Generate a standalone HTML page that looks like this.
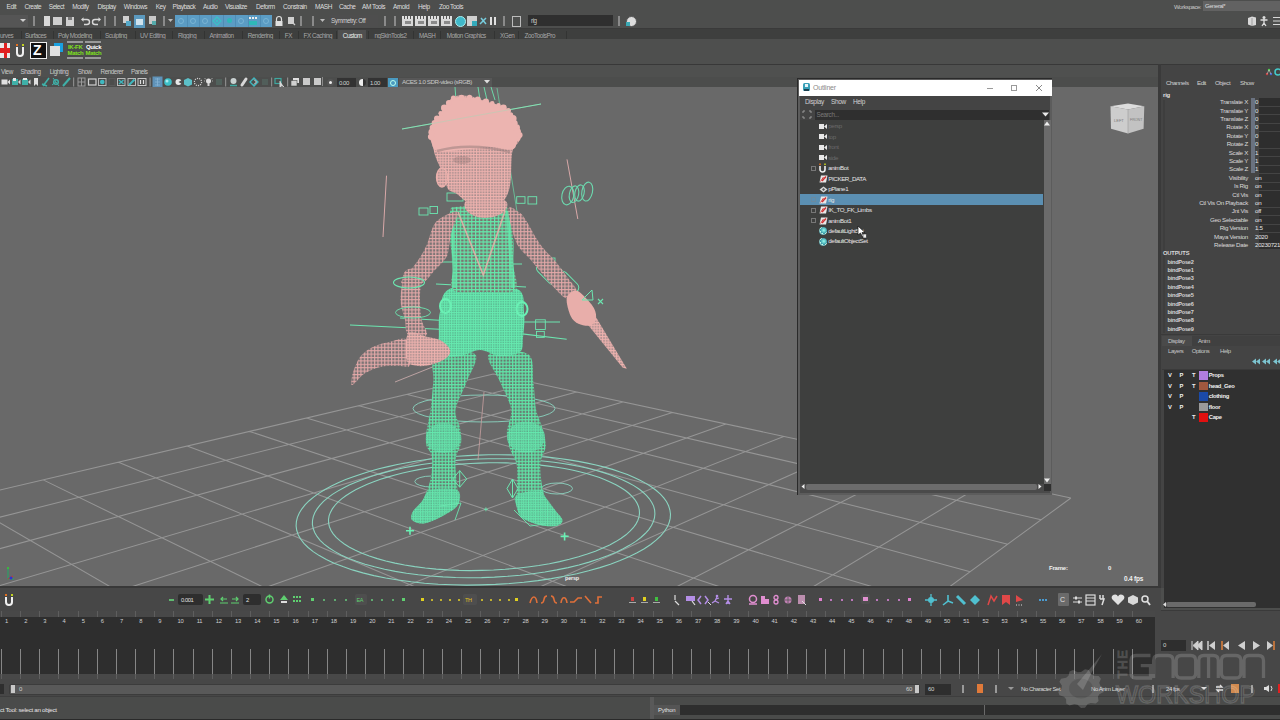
<!DOCTYPE html><html><head><meta charset="utf-8"><style>
html,body{margin:0;padding:0;}
body{width:1280px;height:720px;position:relative;overflow:hidden;background:#4d4e4d;font-family:"Liberation Sans",sans-serif;}
body>div,body>span,body>svg{position:absolute;}
.t{white-space:nowrap;-webkit-font-smoothing:antialiased;}
body{-webkit-font-smoothing:antialiased;}
</style></head><body>
<span class="t" style="left:6.6px;top:2.00px;font-size:6.5px;color:#dedede;letter-spacing:-0.45px;font-weight:400;line-height:10px;">Edit</span>
<span class="t" style="left:24.4px;top:2.00px;font-size:6.5px;color:#dedede;letter-spacing:-0.45px;font-weight:400;line-height:10px;">Create</span>
<span class="t" style="left:48.8px;top:2.00px;font-size:6.5px;color:#dedede;letter-spacing:-0.45px;font-weight:400;line-height:10px;">Select</span>
<span class="t" style="left:72.2px;top:2.00px;font-size:6.5px;color:#dedede;letter-spacing:-0.45px;font-weight:400;line-height:10px;">Modify</span>
<span class="t" style="left:97.6px;top:2.00px;font-size:6.5px;color:#dedede;letter-spacing:-0.45px;font-weight:400;line-height:10px;">Display</span>
<span class="t" style="left:123.8px;top:2.00px;font-size:6.5px;color:#dedede;letter-spacing:-0.45px;font-weight:400;line-height:10px;">Windows</span>
<span class="t" style="left:155.7px;top:2.00px;font-size:6.5px;color:#dedede;letter-spacing:-0.45px;font-weight:400;line-height:10px;">Key</span>
<span class="t" style="left:172.6px;top:2.00px;font-size:6.5px;color:#dedede;letter-spacing:-0.45px;font-weight:400;line-height:10px;">Playback</span>
<span class="t" style="left:203px;top:2.00px;font-size:6.5px;color:#dedede;letter-spacing:-0.45px;font-weight:400;line-height:10px;">Audio</span>
<span class="t" style="left:225px;top:2.00px;font-size:6.5px;color:#dedede;letter-spacing:-0.45px;font-weight:400;line-height:10px;">Visualize</span>
<span class="t" style="left:256px;top:2.00px;font-size:6.5px;color:#dedede;letter-spacing:-0.45px;font-weight:400;line-height:10px;">Deform</span>
<span class="t" style="left:283px;top:2.00px;font-size:6.5px;color:#dedede;letter-spacing:-0.45px;font-weight:400;line-height:10px;">Constrain</span>
<span class="t" style="left:315px;top:2.00px;font-size:6.5px;color:#dedede;letter-spacing:-0.45px;font-weight:400;line-height:10px;">MASH</span>
<span class="t" style="left:339px;top:2.00px;font-size:6.5px;color:#dedede;letter-spacing:-0.45px;font-weight:400;line-height:10px;">Cache</span>
<span class="t" style="left:362px;top:2.00px;font-size:6.5px;color:#dedede;letter-spacing:-0.45px;font-weight:400;line-height:10px;">AM Tools</span>
<span class="t" style="left:393px;top:2.00px;font-size:6.5px;color:#dedede;letter-spacing:-0.45px;font-weight:400;line-height:10px;">Arnold</span>
<span class="t" style="left:418px;top:2.00px;font-size:6.5px;color:#dedede;letter-spacing:-0.45px;font-weight:400;line-height:10px;">Help</span>
<span class="t" style="left:439px;top:2.00px;font-size:6.5px;color:#dedede;letter-spacing:-0.45px;font-weight:400;line-height:10px;">Zoo Tools</span>
<span class="t" style="left:1174px;top:1.50px;font-size:6px;color:#c8c8c8;letter-spacing:-0.45px;font-weight:400;line-height:10px;">Workspace:</span>
<div style="left:1203px;top:1px;width:77px;height:10px;background:#626262;"></div>
<span class="t" style="left:1205px;top:1.20px;font-size:6px;color:#dcdcdc;letter-spacing:-0.45px;font-weight:400;line-height:10px;">General*</span>
<div style="left:0px;top:15px;width:28px;height:12px;background:#555555;"></div>
<svg style="left:20px;top:18px" width="6" height="5"><path d="M0 1 L6 1 L3 4 Z" fill="#cfcfcf"/></svg>
<div style="left:33px;top:16px;width:1.5px;height:10px;background:#8a8a8a;"></div>
<div style="left:104px;top:16px;width:1.5px;height:10px;background:#8a8a8a;"></div>
<div style="left:114px;top:16px;width:1.5px;height:10px;background:#8a8a8a;"></div>
<div style="left:163px;top:16px;width:1.5px;height:10px;background:#8a8a8a;"></div>
<div style="left:300px;top:16px;width:1.5px;height:10px;background:#8a8a8a;"></div>
<div style="left:312px;top:16px;width:1.5px;height:10px;background:#8a8a8a;"></div>
<div style="left:384px;top:16px;width:1.5px;height:10px;background:#8a8a8a;"></div>
<div style="left:394px;top:16px;width:1.5px;height:10px;background:#8a8a8a;"></div>
<div style="left:503px;top:16px;width:1.5px;height:10px;background:#8a8a8a;"></div>
<div style="left:618px;top:16px;width:1.5px;height:10px;background:#8a8a8a;"></div>
<div style="left:44px;top:16px;width:6px;height:10px;background:#d8d8d8;"></div>
<div style="left:53px;top:17px;width:9px;height:8px;background:#cfcfcf;"></div>
<div style="left:66px;top:17px;width:8px;height:9px;background:#d0d0d0;"></div>
<div style="left:68px;top:17px;width:4px;height:3px;background:#7a7a7a;"></div>
<svg style="left:80px;top:16px" width="22" height="10"><path d="M3 3.5 h4 a2.5 2.5 0 0 1 0 5 h-3" stroke="#d8d8d8" stroke-width="1.4" fill="none"/><path d="M1 3.5 L3.5 1.3 L3.5 5.7Z" fill="#d8d8d8"/><path d="M19 3.5 h-4 a2.5 2.5 0 0 0 0 5 h3" stroke="#d8d8d8" stroke-width="1.4" fill="none"/><path d="M21 3.5 L18.5 1.3 L18.5 5.7Z" fill="#d8d8d8"/></svg>
<div style="left:123px;top:16px;width:6px;height:7px;background:#cfcfcf;"></div>
<div style="left:126px;top:21px;width:5px;height:5px;background:#55a8c8;"></div>
<div style="left:134px;top:14.5px;width:11px;height:13px;background:#5b99be;"></div>
<div style="left:136px;top:19px;width:7px;height:6px;background:#cfe3ee;"></div>
<div style="left:149px;top:16px;width:7px;height:8px;background:#c8c8c8;"></div>
<div style="left:152px;top:21px;width:4px;height:4px;background:#5aa;"></div>
<svg style="left:168px;top:19px" width="5" height="4"><path d="M0 0 L5 0 L2.5 3 Z" fill="#bbb"/></svg>
<div style="left:174.5px;top:14.6px;width:97.5px;height:12.4px;background:#5b9cc4;"></div>
<div style="left:186.69px;top:15px;width:0.8px;height:12px;background:#4f8db5;"></div>
<div style="left:198.88px;top:15px;width:0.8px;height:12px;background:#4f8db5;"></div>
<div style="left:211.07px;top:15px;width:0.8px;height:12px;background:#4f8db5;"></div>
<div style="left:223.26px;top:15px;width:0.8px;height:12px;background:#4f8db5;"></div>
<div style="left:235.45px;top:15px;width:0.8px;height:12px;background:#4f8db5;"></div>
<div style="left:247.64px;top:15px;width:0.8px;height:12px;background:#4f8db5;"></div>
<div style="left:259.83px;top:15px;width:0.8px;height:12px;background:#4f8db5;"></div>
<div style="left:177.5px;top:17.8px;width:6px;height:6px;border-radius:50%;border:1px solid #79b4d4;box-sizing:border-box"></div>
<div style="left:189.69px;top:17.8px;width:6px;height:6px;border-radius:50%;border:1px solid #79b4d4;box-sizing:border-box"></div>
<div style="left:201.88px;top:17.8px;width:6px;height:6px;border-radius:50%;border:1px solid #79b4d4;box-sizing:border-box"></div>
<div style="left:238.45px;top:17.8px;width:6px;height:6px;border-radius:50%;border:1px solid #79b4d4;box-sizing:border-box"></div>
<div style="left:262.83px;top:17.8px;width:6px;height:6px;border-radius:50%;border:1px solid #79b4d4;box-sizing:border-box"></div>
<svg style="left:211.5px;top:16px" width="10" height="10"><path d="M5 1 L9 5 L5 9 L1 5Z" stroke="#3ac0c8" stroke-width="1.3" fill="none"/><circle cx="5" cy="5" r="1.2" fill="#3ac0c8"/></svg>
<div style="left:226.5px;top:18px;width:5px;height:5px;border-radius:50%;background:#2fb8b8"></div>
<svg style="left:248px;top:16px" width="10" height="10"><rect x="1" y="1" width="2" height="2" fill="#eee"/><rect x="4" y="1" width="2" height="2" fill="#eee"/><rect x="7" y="1" width="2" height="2" fill="#eee"/><rect x="1" y="5" width="8" height="4" fill="#2fb8b8"/></svg>
<svg style="left:274px;top:15px" width="22" height="12"><path d="M2.5 6 V4 a2.5 2.5 0 0 1 5 0 V6" stroke="#e0e0e0" stroke-width="1.2" fill="none"/><rect x="1.5" y="6" width="7" height="5" fill="#e0e0e0"/><rect x="14" y="2" width="6" height="7" fill="#cfcfcf"/><path d="M17 6 L21 10" stroke="#cfcfcf" stroke-width="1.2"/></svg>
<svg style="left:320px;top:19px" width="5" height="4"><path d="M0 0 L5 0 L2.5 3 Z" fill="#bbb"/></svg>
<div style="left:329px;top:15px;width:49px;height:12px;background:#4e4e4e;"></div>
<span class="t" style="left:331px;top:16.00px;font-size:6.3px;color:#d0d0d0;letter-spacing:-0.45px;font-weight:400;line-height:10px;">Symmetry: Off</span>
<div style="left:402px;top:15.5px;width:11px;height:3px;background:#e0e0e0;;background:repeating-linear-gradient(90deg,#e0e0e0 0 2px,#555 2px 3px)"></div>
<div style="left:402px;top:19px;width:11px;height:7px;background:#d8d8d8;"></div>
<div style="left:404.5px;top:21px;width:6px;height:3px;background:#8a8a8a;"></div>
<div style="left:415px;top:15.5px;width:11px;height:3px;background:#e0e0e0;;background:repeating-linear-gradient(90deg,#e0e0e0 0 2px,#555 2px 3px)"></div>
<div style="left:415px;top:19px;width:11px;height:7px;background:#d8d8d8;"></div>
<div style="left:417.5px;top:21px;width:6px;height:3px;background:#8a8a8a;"></div>
<div style="left:428px;top:15.5px;width:11px;height:3px;background:#e0e0e0;;background:repeating-linear-gradient(90deg,#e0e0e0 0 2px,#555 2px 3px)"></div>
<div style="left:428px;top:19px;width:11px;height:7px;background:#d8d8d8;"></div>
<div style="left:430.5px;top:21px;width:6px;height:3px;background:#8a8a8a;"></div>
<div style="left:441px;top:15.5px;width:11px;height:3px;background:#e0e0e0;;background:repeating-linear-gradient(90deg,#e0e0e0 0 2px,#555 2px 3px)"></div>
<div style="left:441px;top:19px;width:11px;height:7px;background:#d8d8d8;"></div>
<div style="left:443.5px;top:21px;width:6px;height:3px;background:#8a8a8a;"></div>
<div style="left:455px;top:16px;width:9px;height:9px;border-radius:50%;background:#3fb8c9;border:1px solid #aee"></div>
<div style="left:467px;top:16px;width:10px;height:10px;background:#d0d0d0;"></div>
<div style="left:472px;top:21px;width:5px;height:5px;background:#3ab;"></div>
<svg style="left:478px;top:16px" width="10" height="10"><path d="M2 8 L8 2 M3 2 L8 8" stroke="#7cd" stroke-width="1.5"/></svg>
<div style="left:490px;top:17px;width:2px;height:8px;background:#e0e0e0;"></div>
<div style="left:494px;top:17px;width:2px;height:8px;background:#e0e0e0;"></div>
<div style="left:512px;top:16px;width:7px;height:9px;background:transparent;;border:1px solid #bbb"></div>
<div style="left:528px;top:15px;width:85px;height:11px;background:#2f2f2f;"></div>
<span class="t" style="left:531px;top:15.50px;font-size:6.3px;color:#c8c8c8;letter-spacing:-0.45px;font-weight:400;line-height:10px;">rig</span>
<div style="left:626px;top:16px;width:9px;height:9px;border-radius:50%;background:#ddd;border:1px solid #555"></div>
<div style="left:626px;top:22px;width:4px;height:4px;background:#3aa9b5;"></div>
<svg style="left:1246px;top:15px" width="34" height="12"><path d="M2 3 L6 1.5 L10 2.5 L10 10 L6 11 L2 9.5Z" fill="#d8d8d8"/><path d="M6 3 V11" stroke="#888" stroke-width=".7"/><circle cx="18" cy="2.5" r="1.5" fill="#ddd"/><path d="M14.5 5 H21.5 M18 4 V8 M18 8 L16 11 M18 8 L20 11" stroke="#ddd" stroke-width="1.3"/><path d="M27 2.5 H34 M27 6 H34 M27 9.5 H34" stroke="#d8d8d8" stroke-width="1.2"/></svg>
<div style="left:0px;top:28px;width:1280px;height:1px;background:#3a3a3a;"></div>
<div style="left:0px;top:29px;width:1280px;height:10px;background:#3e3f3e;"></div>
<div style="left:338px;top:30px;width:28px;height:9px;background:#4f4f4f;"></div>
<div style="left:21px;top:30.5px;width:1px;height:8px;background:#333433;"></div>
<div style="left:53px;top:30.5px;width:1px;height:8px;background:#333433;"></div>
<div style="left:100px;top:30.5px;width:1px;height:8px;background:#333433;"></div>
<div style="left:135px;top:30.5px;width:1px;height:8px;background:#333433;"></div>
<div style="left:172px;top:30.5px;width:1px;height:8px;background:#333433;"></div>
<div style="left:204px;top:30.5px;width:1px;height:8px;background:#333433;"></div>
<div style="left:242px;top:30.5px;width:1px;height:8px;background:#333433;"></div>
<div style="left:279px;top:30.5px;width:1px;height:8px;background:#333433;"></div>
<div style="left:298px;top:30.5px;width:1px;height:8px;background:#333433;"></div>
<div style="left:336px;top:30.5px;width:1px;height:8px;background:#333433;"></div>
<div style="left:368px;top:30.5px;width:1px;height:8px;background:#333433;"></div>
<div style="left:413px;top:30.5px;width:1px;height:8px;background:#333433;"></div>
<div style="left:440px;top:30.5px;width:1px;height:8px;background:#333433;"></div>
<div style="left:494px;top:30.5px;width:1px;height:8px;background:#333433;"></div>
<div style="left:518px;top:30.5px;width:1px;height:8px;background:#333433;"></div>
<div style="left:566px;top:30.5px;width:1px;height:8px;background:#333433;"></div>
<span class="t" style="left:0px;top:30.50px;font-size:6.3px;color:#a8a8a8;letter-spacing:-0.45px;font-weight:400;line-height:10px;">urves</span>
<span class="t" style="left:25px;top:30.50px;font-size:6.3px;color:#a8a8a8;letter-spacing:-0.45px;font-weight:400;line-height:10px;">Surfaces</span>
<span class="t" style="left:58px;top:30.50px;font-size:6.3px;color:#a8a8a8;letter-spacing:-0.45px;font-weight:400;line-height:10px;">Poly Modeling</span>
<span class="t" style="left:105px;top:30.50px;font-size:6.3px;color:#a8a8a8;letter-spacing:-0.45px;font-weight:400;line-height:10px;">Sculpting</span>
<span class="t" style="left:140px;top:30.50px;font-size:6.3px;color:#a8a8a8;letter-spacing:-0.45px;font-weight:400;line-height:10px;">UV Editing</span>
<span class="t" style="left:178px;top:30.50px;font-size:6.3px;color:#a8a8a8;letter-spacing:-0.45px;font-weight:400;line-height:10px;">Rigging</span>
<span class="t" style="left:209.6px;top:30.50px;font-size:6.3px;color:#a8a8a8;letter-spacing:-0.45px;font-weight:400;line-height:10px;">Animation</span>
<span class="t" style="left:247.7px;top:30.50px;font-size:6.3px;color:#a8a8a8;letter-spacing:-0.45px;font-weight:400;line-height:10px;">Rendering</span>
<span class="t" style="left:284.8px;top:30.50px;font-size:6.3px;color:#a8a8a8;letter-spacing:-0.45px;font-weight:400;line-height:10px;">FX</span>
<span class="t" style="left:303.6px;top:30.50px;font-size:6.3px;color:#a8a8a8;letter-spacing:-0.45px;font-weight:400;line-height:10px;">FX Caching</span>
<span class="t" style="left:342.8px;top:30.50px;font-size:6.3px;color:#eeeeee;letter-spacing:-0.45px;font-weight:400;line-height:10px;">Custom</span>
<span class="t" style="left:374.5px;top:30.50px;font-size:6.3px;color:#a8a8a8;letter-spacing:-0.45px;font-weight:400;line-height:10px;">ngSkinTools2</span>
<span class="t" style="left:419px;top:30.50px;font-size:6.3px;color:#a8a8a8;letter-spacing:-0.45px;font-weight:400;line-height:10px;">MASH</span>
<span class="t" style="left:446.7px;top:30.50px;font-size:6.3px;color:#a8a8a8;letter-spacing:-0.45px;font-weight:400;line-height:10px;">Motion Graphics</span>
<span class="t" style="left:500px;top:30.50px;font-size:6.3px;color:#a8a8a8;letter-spacing:-0.45px;font-weight:400;line-height:10px;">XGen</span>
<span class="t" style="left:524.6px;top:30.50px;font-size:6.3px;color:#a8a8a8;letter-spacing:-0.45px;font-weight:400;line-height:10px;">ZooToolsPro</span>
<div style="left:0px;top:39px;width:1280px;height:25px;background:#4e4f4e;"></div>
<div style="left:0px;top:43px;width:10px;height:15px;background:#e8e8e8;"></div>
<div style="left:0px;top:48px;width:10px;height:5px;background:#e02020;"></div>
<div style="left:4px;top:43px;width:3px;height:15px;background:#e02020;"></div>
<svg style="left:14px;top:42px" width="12" height="16"><path d="M3 5 v6 a3 3 0 0 0 6 0 v-6" stroke="#f0f0f0" stroke-width="2" fill="none"/><rect x="2" y="2" width="2" height="2" fill="#e07020"/><rect x="8" y="2" width="2" height="2" fill="#c0d020"/></svg>
<div style="left:29.5px;top:41.5px;width:17.5px;height:17px;background:#111;;border:1px solid #eee;box-sizing:border-box"></div>
<span class="t" style="left:33px;top:42.00px;font-size:14px;color:#fff;letter-spacing:0px;font-weight:700;line-height:16px;">Z</span>
<div style="left:54px;top:43px;width:9px;height:9px;background:#1aa0e0;"></div>
<div style="left:50px;top:46px;width:10px;height:10px;background:#e0e0e0;"></div>
<div style="left:67px;top:41px;width:16px;height:18px;background:#4a4a4a;;border-top:2px solid #999;border-bottom:2px solid #999;box-sizing:border-box"></div>
<span class="t" style="left:68px;top:43.50px;font-size:6px;color:#7fe020;letter-spacing:-0.3px;font-weight:700;line-height:7px;">IK-FK</span>
<span class="t" style="left:67.5px;top:49.50px;font-size:6px;color:#7fe020;letter-spacing:-0.3px;font-weight:700;line-height:7px;">Match</span>
<div style="left:85px;top:41px;width:16px;height:18px;background:#4a4a4a;;border-top:2px solid #999;border-bottom:2px solid #999;box-sizing:border-box"></div>
<span class="t" style="left:86px;top:43.50px;font-size:6px;color:#ffffff;letter-spacing:-0.3px;font-weight:700;line-height:7px;">Quick</span>
<span class="t" style="left:85.5px;top:49.50px;font-size:6px;color:#7fe020;letter-spacing:-0.3px;font-weight:700;line-height:7px;">Match</span>
<div style="left:0px;top:64px;width:1280px;height:1px;background:#383838;"></div>
<div style="left:0px;top:65px;width:1158px;height:12px;background:#4f504f;"></div>
<div style="left:0px;top:77px;width:1158px;height:10px;background:#4c4d4c;"></div>
<span class="t" style="left:1px;top:67.20px;font-size:6.3px;color:#c8c8c8;letter-spacing:-0.45px;font-weight:400;line-height:10px;">View</span>
<span class="t" style="left:20.5px;top:67.20px;font-size:6.3px;color:#c8c8c8;letter-spacing:-0.45px;font-weight:400;line-height:10px;">Shading</span>
<span class="t" style="left:49.8px;top:67.20px;font-size:6.3px;color:#c8c8c8;letter-spacing:-0.45px;font-weight:400;line-height:10px;">Lighting</span>
<span class="t" style="left:77.7px;top:67.20px;font-size:6.3px;color:#c8c8c8;letter-spacing:-0.45px;font-weight:400;line-height:10px;">Show</span>
<span class="t" style="left:100.6px;top:67.20px;font-size:6.3px;color:#c8c8c8;letter-spacing:-0.45px;font-weight:400;line-height:10px;">Renderer</span>
<span class="t" style="left:131px;top:67.20px;font-size:6.3px;color:#c8c8c8;letter-spacing:-0.45px;font-weight:400;line-height:10px;">Panels</span>
<svg style="left:0px;top:76px" width="300" height="12">
<rect x="1.5" y="3.5" width="6" height="5" fill="#e0e0e0"/><path d="M7.5 6 L10 3.5 V8.5Z" fill="#e0e0e0"/>
<rect x="12" y="3" width="6" height="6" fill="#3fb0a8"/><rect x="13" y="2" width="3" height="3" fill="#e8e8e8"/><path d="M18 6 L20.5 3.5 V8.5Z" fill="#d8d8d8"/>
<rect x="22" y="3" width="6" height="6" fill="#3fb0a8"/><rect x="23" y="2" width="4" height="2" fill="#e8e8e8"/><path d="M28 6 L30.5 3.5 V8.5Z" fill="#d8d8d8"/>
<path d="M34 2 H38 V10 L36 8 L34 10Z" fill="#e0e0e0"/>
<path d="M43 10 L49 2 M42 8 L47 10" stroke="#3fb0a8" stroke-width="1.6"/>
<circle cx="56" cy="6" r="2.3" fill="none" stroke="#3fb0a8" stroke-width="1.5"/><path d="M53 2 L59 10 M52 9 L56 6" stroke="#3fb0a8" stroke-width="1"/>
<path d="M63 10 L70 2" stroke="#3fb0a8" stroke-width="2"/>
<rect x="73" y="1.5" width="1.2" height="9" fill="#8a8a8a"/>
<rect x="78" y="2" width="7" height="8" fill="none" stroke="#9a9a9a" stroke-width="1"/><path d="M81.5 2 V10 M78 6 H85" stroke="#9a9a9a"/>
<rect x="88.5" y="3" width="7.5" height="6" fill="none" stroke="#d0d0d0" stroke-width="1.2"/>
<rect x="98.5" y="2.5" width="7.5" height="7" fill="none" stroke="#b8b8b8" stroke-width="1"/><circle cx="102.25" cy="6" r="2.3" fill="#3fb8c0"/>
<rect x="109" y="2.5" width="6" height="7" fill="none" stroke="#5a5a5a" stroke-width="1"/>
<rect x="117.5" y="2.5" width="7.5" height="7" fill="none" stroke="#b8b8b8" stroke-width="1"/><path d="M119 4 L123.5 8 M123.5 4 L119 8" stroke="#3fb8c0" stroke-width="1.3"/>
<rect x="128" y="2.5" width="7.5" height="7" fill="none" stroke="#b8b8b8" stroke-width="1"/><path d="M129 9 L134.5 3.5" stroke="#3fb8c0" stroke-width="2"/>
<rect x="138" y="2.5" width="8" height="7" fill="none" stroke="#c8c8c8" stroke-width="1"/><path d="M140.5 4 V8 M143.5 4 V8" stroke="#e0e0e0" stroke-width="1.2"/>
<rect x="149.5" y="1.5" width="1.2" height="9" fill="#8a8a8a"/>
<rect x="152.5" y="0.5" width="10" height="11" fill="#5f92b8"/><path d="M155 3 H160 M155 6 H160 M155 9 H160 M157.5 2 V10" stroke="#86b4d4" stroke-width=".8"/>
<circle cx="168" cy="6" r="3.8" fill="#3cc0c8"/><circle cx="167" cy="5" r="1.5" fill="#a8ecf0"/>
<circle cx="178.5" cy="6" r="3" fill="#e8e8e8"/><path d="M178.5 6 L182 4 V8Z" fill="#4c4d4c"/>
<path d="M188 2 L192 4 V8.5 L188 10.5 L184 8.5 V4Z" fill="#5cc0c8"/>
<circle cx="198" cy="6" r="3.6" fill="none" stroke="#d0d0d0" stroke-width="1.2" stroke-dasharray="1.2 1"/>
<circle cx="208.5" cy="5" r="2.5" fill="#e0e0e0"/><rect x="207.5" y="7" width="2" height="3" fill="#d0d0d0"/><path d="M204.5 2 L206 3.5 M212.5 2 L211 3.5 M204 5 H205 M212 5 H213" stroke="#ccc" stroke-width=".7"/>
<rect x="216" y="3" width="6" height="6" fill="#557068" opacity=".6"/>
<rect x="225" y="1.5" width="1.2" height="9" fill="#8a8a8a"/>
<circle cx="233.5" cy="5" r="3" fill="#c8d0d0"/><path d="M230 9.5 H237" stroke="#3fa8a0" stroke-width="1.5"/>
<path d="M242 9 L246 3" stroke="#d8d8d8" stroke-width="3" stroke-linecap="round"/>
<path d="M254 2 L258 6 L254 10 L250 6Z" fill="none" stroke="#3fb8c0" stroke-width="1.3"/><path d="M254 3.5 L256.5 6 L254 8.5" stroke="#e0e0e0" fill="none"/>
<rect x="262" y="3" width="6" height="6" fill="#557068" opacity=".5"/>
<rect x="271" y="1.5" width="1.2" height="9" fill="#8a8a8a"/>
<rect x="275" y="2.5" width="6" height="5" fill="none" stroke="#3fa8a0" stroke-width="1.2"/><path d="M280 5 L280 11 L282 9.5 L284 11" stroke="#d8d8d8" stroke-width="1" fill="#d8d8d8"/>
<rect x="287" y="1.5" width="1.2" height="9" fill="#8a8a8a"/>
<rect x="293" y="2" width="6" height="5" fill="#e0e0e0"/><rect x="291" y="4.5" width="6" height="5.5" fill="#d0d0d0" stroke="#4c4d4c" stroke-width=".6"/>
</svg>
<div style="left:303px;top:78px;width:7px;height:7px;background:#d8d8d8;;opacity:.9"></div>
<div style="left:314px;top:78px;width:7px;height:7px;background:#d8d8d8;;opacity:.9"></div>
<div style="left:322px;top:77px;width:1px;height:9px;background:#8a8a8a;"></div>
<div style="left:327px;top:78.5px;width:7px;height:7px;border-radius:50%;background:#eee;border:2px solid #555;box-sizing:border-box"></div>
<div style="left:337px;top:78px;width:18.5px;height:9px;background:#333333;"></div>
<span class="t" style="left:339px;top:77.50px;font-size:6px;color:#d0d0d0;letter-spacing:-0.45px;font-weight:400;line-height:10px;">0.00</span>
<div style="left:359px;top:78.5px;width:7px;height:7px;border-radius:50%;background:linear-gradient(90deg,#eee 50%,#333 50%)"></div>
<div style="left:368px;top:78px;width:19px;height:9px;background:#333333;"></div>
<span class="t" style="left:370px;top:77.50px;font-size:6px;color:#d0d0d0;letter-spacing:-0.45px;font-weight:400;line-height:10px;">1.00</span>
<div style="left:388px;top:78px;width:10px;height:9px;background:#4a9ac0;"></div>
<div style="left:390px;top:79.5px;width:6px;height:6px;border-radius:50%;border:1px solid #bfe;box-sizing:border-box"></div>
<div style="left:399px;top:77.6px;width:93px;height:9.4px;background:#575757;"></div>
<span class="t" style="left:402px;top:77.30px;font-size:6.2px;color:#c8c8c8;letter-spacing:-0.45px;font-weight:400;line-height:10px;">ACES 1.0 SDR-video (sRGB)</span>
<svg style="left:484px;top:80px" width="6" height="4"><path d="M0 0 L6 0 L3 3.5 Z" fill="#ddd"/></svg>
<svg style="left:0;top:87px" width="1158" height="499" viewBox="0 87 1158 499">
<rect x="0" y="87" width="1158" height="499" fill="#696969"/>
<path d="M-133.5 521.4L460.1 944.9M-40.4 499.5L578.7 858.1M43.2 479.9L674.9 787.8M118.6 462.2L754.4 729.6M187.1 446.1L821.2 680.7M249.5 431.4L878.2 639.1M306.5 418.0L927.3 603.1M359.0 405.7L970.2 571.8M407.3 394.4L1007.8 544.2M452.0 383.9L1041.2 519.8M493.4 374.1L1070.9 498.0M-133.5 521.4L493.4 374.1M-103.0 543.1L533.6 382.8M-69.0 567.4L576.6 392.0M-30.9 594.6L622.8 401.9M12.1 625.3L672.4 412.5M61.0 660.2L725.9 424.0M117.2 700.3L783.7 436.4M182.4 746.8L846.4 449.9M258.9 801.4L914.6 464.5M349.9 866.3L989.2 480.5M460.1 944.9L1070.9 498.0" stroke="#959595" stroke-width="1.05" fill="none"/>
<defs>
<pattern id="pm" width="3.4" height="3.4" patternUnits="userSpaceOnUse"><rect width="3.4" height="3.4" fill="#7a7474"/><path d="M0 0.6H3.4M0.6 0V3.4" stroke="#e4a8a8" stroke-width="1.1"/></pattern>
<pattern id="pf" width="2.8" height="2.8" patternUnits="userSpaceOnUse"><rect width="2.8" height="2.8" fill="#a88e8e"/><path d="M0 0.6H2.8M0.6 0V2.8" stroke="#eeb2ae" stroke-width="1.1"/></pattern>
<pattern id="gm" width="3.2" height="3.2" patternUnits="userSpaceOnUse"><rect width="3.2" height="3.2" fill="#687870"/><path d="M0 0.6H3.2M0.6 0V3.2" stroke="#60e6a8" stroke-width="1.15"/></pattern>
<pattern id="gd" width="2.4" height="2.4" patternUnits="userSpaceOnUse"><rect width="2.4" height="2.4" fill="#5ab890"/><path d="M0 0.5H2.4M0.5 0V2.4" stroke="#66eab0" stroke-width="1"/></pattern>
<pattern id="gt" width="3.8" height="3.4" patternUnits="userSpaceOnUse"><rect width="3.8" height="3.4" fill="#7a7470"/><path d="M0 0.6H3.8M0.6 0V3.4" stroke="#64e8aa" stroke-width="1.2"/></pattern>
</defs>
<path d="M586.5 473.5 L593.2 475.5 L599.6 477.6 L605.6 479.9 L611.2 482.4 L616.4 485.0 L621.1 487.7 L625.4 490.5 L629.1 493.5 L632.3 496.6 L635.0 499.8 L637.0 503.1 L638.5 506.4 L639.3 509.9 L639.5 513.4 L639.0 516.9 L637.8 520.5 L635.9 524.1 L633.3 527.7 L630.0 531.2 L626.0 534.8 L621.2 538.2 L615.8 541.6 L609.7 544.9 L602.8 548.1 L595.4 551.2 L587.3 554.1 L578.6 556.8 L569.3 559.3 L559.6 561.6 L549.4 563.7 L538.8 565.5 L527.8 567.0 L516.6 568.3 L505.2 569.3 L493.6 570.0 L482.0 570.4 L470.3 570.6 L458.8 570.4 L447.4 569.9 L436.2 569.1 L425.3 568.0 L414.7 566.6 L404.6 565.0 L395.0 563.1 L385.8 561.0 L377.3 558.6 L369.3 556.0 L362.0 553.3 L355.4 550.3 L349.5 547.2 L344.3 544.0 L339.9 540.7 L336.2 537.3 L333.2 533.8 L330.9 530.2 L329.4 526.7 L328.6 523.1 L328.5 519.5 L329.1 515.9 L330.4 512.4 L332.3 508.9 L334.8 505.5 L337.9 502.1 L341.6 498.9 L345.8 495.7 L350.5 492.7 L355.6 489.7 L361.3 486.9 L367.3 484.2 L373.7 481.7 L380.5 479.3 L387.6 477.1 L395.0 475.0 L402.7 473.0 L410.6 471.2 L418.7 469.6 L427.0 468.2 L435.5 466.9 L444.1 465.8 L452.8 464.8 L461.6 464.1 L470.5 463.5 L479.4 463.1 L488.2 462.8 L497.1 462.8 L505.9 462.9 L514.7 463.2 L523.4 463.6 L531.9 464.3 L540.3 465.1 L548.6 466.1 L556.7 467.2 L564.5 468.5 L572.1 470.0 L579.5 471.7Z" stroke="#8ad4c0" stroke-width="1.1" fill="none"/>
<path d="M595.5 470.3 L602.9 472.4 L610.0 474.8 L616.6 477.2 L622.8 479.9 L628.5 482.7 L633.8 485.6 L638.6 488.7 L642.8 492.0 L646.4 495.4 L649.4 498.8 L651.8 502.4 L653.6 506.1 L654.6 509.9 L654.9 513.8 L654.5 517.7 L653.4 521.6 L651.5 525.6 L648.8 529.6 L645.2 533.5 L640.9 537.5 L635.8 541.4 L629.9 545.1 L623.2 548.8 L615.8 552.4 L607.6 555.8 L598.7 559.1 L589.1 562.1 L578.9 565.0 L568.1 567.6 L556.7 569.9 L544.9 572.0 L532.7 573.7 L520.2 575.2 L507.5 576.3 L494.5 577.1 L481.5 577.6 L468.6 577.7 L455.6 577.5 L442.9 576.9 L430.4 576.0 L418.3 574.8 L406.5 573.2 L395.3 571.4 L384.6 569.2 L374.5 566.8 L365.0 564.2 L356.3 561.3 L348.2 558.2 L341.0 554.9 L334.6 551.4 L328.9 547.8 L324.1 544.1 L320.1 540.3 L317.0 536.4 L314.7 532.4 L313.2 528.5 L312.4 524.5 L312.5 520.5 L313.3 516.6 L314.8 512.7 L317.1 508.9 L320.0 505.1 L323.5 501.4 L327.7 497.9 L332.4 494.4 L337.7 491.1 L343.4 487.9 L349.7 484.8 L356.4 481.9 L363.5 479.2 L370.9 476.6 L378.8 474.1 L386.9 471.9 L395.3 469.8 L403.9 467.8 L412.8 466.1 L421.9 464.5 L431.1 463.2 L440.5 462.0 L450.0 461.0 L459.5 460.1 L469.2 459.5 L478.8 459.0 L488.5 458.8 L498.1 458.7 L507.7 458.8 L517.2 459.1 L526.7 459.6 L536.0 460.3 L545.1 461.2 L554.1 462.3 L562.9 463.5 L571.5 464.9 L579.8 466.5 L587.8 468.3Z" stroke="#8ad4c0" stroke-width="1.1" fill="none"/>
<path d="M604.4 467.1 L612.5 469.4 L620.1 471.9 L627.4 474.6 L634.2 477.4 L640.5 480.5 L646.3 483.6 L651.6 487.0 L656.3 490.5 L660.4 494.1 L663.8 497.9 L666.6 501.8 L668.6 505.8 L669.9 510.0 L670.5 514.2 L670.2 518.4 L669.1 522.8 L667.2 527.1 L664.4 531.5 L660.7 535.9 L656.1 540.2 L650.7 544.5 L644.3 548.7 L637.1 552.8 L629.0 556.8 L620.1 560.6 L610.4 564.2 L599.9 567.6 L588.6 570.8 L576.8 573.7 L564.3 576.3 L551.3 578.6 L537.8 580.6 L523.9 582.2 L509.8 583.5 L495.5 584.4 L481.1 584.9 L466.7 585.1 L452.4 584.8 L438.3 584.2 L424.5 583.2 L411.1 581.8 L398.1 580.0 L385.7 578.0 L373.9 575.6 L362.8 572.9 L352.4 569.9 L342.9 566.6 L334.1 563.2 L326.3 559.5 L319.3 555.6 L313.2 551.6 L308.1 547.5 L303.9 543.3 L300.6 539.0 L298.2 534.7 L296.7 530.3 L296.1 525.9 L296.4 521.6 L297.4 517.3 L299.3 513.0 L301.9 508.8 L305.2 504.7 L309.2 500.7 L313.9 496.9 L319.1 493.1 L325.0 489.5 L331.4 486.1 L338.2 482.8 L345.6 479.6 L353.4 476.7 L361.5 473.9 L370.0 471.2 L378.9 468.8 L388.0 466.6 L397.4 464.5 L407.0 462.7 L416.8 461.0 L426.8 459.5 L437.0 458.2 L447.2 457.2 L457.5 456.3 L467.9 455.6 L478.3 455.1 L488.7 454.8 L499.1 454.8 L509.4 454.9 L519.7 455.2 L529.9 455.8 L539.9 456.5 L549.8 457.4 L559.5 458.5 L569.0 459.9 L578.3 461.4 L587.3 463.1 L596.0 465.0Z" stroke="#8ad4c0" stroke-width="1.1" fill="none"/>
<ellipse cx="431.8" cy="481.5" rx="17" ry="5.5" stroke="#8ad4c0" stroke-width="0.9" fill="none"/>
<ellipse cx="557" cy="488.5" rx="15.5" ry="5.5" stroke="#8ad4c0" stroke-width="0.9" fill="none"/>
<ellipse cx="484" cy="408.5" rx="71" ry="13.5" stroke="#8ad4c0" stroke-width="0.9" fill="none"/>
<path d="M406 530.8H414M410 526.8V534.8" stroke="#6af0b4" stroke-width="1.6"/>
<path d="M560.6 536.4H568.6M564.6 532.4V540.4" stroke="#6af0b4" stroke-width="1.6"/>
<path d="M483.9 509.3h4M485.9 507.3v4" stroke="#6af0b4" stroke-width="0.8"/>
<path d="M386.5 175.7 L383 237" stroke="#d8a8a8" stroke-width="1"/>
<path d="M567 159.4 L577.8 219" stroke="#d8a8a8" stroke-width="1"/>
<path d="M484 392 L478 460" stroke="#c8a0a0" stroke-width="0.8"/>
<path d="M395 382 L455 358" stroke="#d0b0b0" stroke-width="0.8"/>
<path d="M455 87 L456 100" stroke="#6ce6b0" stroke-width="0.9"/>
<path d="M478 87 L480 100" stroke="#6ce6b0" stroke-width="0.9"/>
<path d="M484 87 L487 100" stroke="#6ce6b0" stroke-width="0.9"/>
<path d="M491 87 L495 100" stroke="#6ce6b0" stroke-width="0.9"/>
<path d="M497 88 L520 230" stroke="#6ce6b0" stroke-width="0.8" opacity="0.8"/>
<rect x="419" y="208" width="9" height="7" stroke="#6ce6b0" stroke-width="0.9" fill="none"/>
<rect x="430" y="206.5" width="7.5" height="7" stroke="#6ce6b0" stroke-width="0.9" fill="none"/>
<rect x="516.7" y="196.7" width="8.3" height="6.6" stroke="#6ce6b0" stroke-width="0.9" fill="none"/>
<rect x="528" y="196.7" width="8.7" height="7.3" stroke="#6ce6b0" stroke-width="0.9" fill="none"/>
<rect x="447" y="193" width="16" height="8" stroke="#6ce6b0" stroke-width="0.9" fill="none"/>
<rect x="535.6" y="319.8" width="9.7" height="9.7" stroke="#6ce6b0" stroke-width="0.9" fill="none"/>
<rect x="536.5" y="331.4" width="7.8" height="6" stroke="#6ce6b0" stroke-width="0.9" fill="none"/>
<rect x="547" y="258" width="8" height="6" stroke="#6ce6b0" stroke-width="0.9" fill="none"/>
<ellipse cx="567.8" cy="195.6" rx="5.9" ry="9.4" transform="rotate(12 567.8 195.6)" stroke="#6cd8ae" stroke-width="1.1" fill="none"/>
<ellipse cx="574" cy="194.2" rx="4.6" ry="8.4" transform="rotate(12 574 194.2)" stroke="#6cd8ae" stroke-width="1.1" fill="none"/>
<ellipse cx="579.5" cy="193" rx="4.6" ry="8.2" transform="rotate(12 579.5 193)" stroke="#6cd8ae" stroke-width="1.1" fill="none"/>
<ellipse cx="587.2" cy="191.6" rx="5.3" ry="9.6" transform="rotate(12 587.2 191.6)" stroke="#6cd8ae" stroke-width="1.1" fill="none"/>
<path d="M350 325 L455 330 M400 318 L470 322 M518 333.4 L566.7 339.2 M520 322 L560 322" stroke="#6ce6b0" stroke-width="1.1"/>
<path d="M436 284 L455 285 M507 286 L526 287 M440 262 L456 262 M508 264 L522 264" stroke="#6ce6b0" stroke-width="1.1"/>
<path d="M402 129 L541 104" stroke="#6ce6b0" stroke-width="1"/>
<path d="M436.1 356.7 C429.2 361.3 434.2 372.9 433.3 381.7 C432.4 390.5 431.8 401.1 430.6 409.4 C429.5 417.7 427.1 425.7 426.4 431.7 C425.7 437.7 425.5 441.4 426.4 445.6 C427.3 449.8 431.2 451.1 431.9 456.7 C432.6 462.2 432.2 471.5 430.6 478.9 C429.0 486.3 425.2 495.6 422.2 501.1 C419.2 506.7 414.1 509.0 412.5 512.2 C410.9 515.5 410.4 518.8 412.5 520.6 C414.6 522.5 419.7 524.2 425.0 523.3 C430.3 522.4 438.8 518.2 444.4 515.0 C449.9 511.8 456.2 509.0 458.3 503.9 C460.4 498.8 457.3 491.8 456.9 484.4 C456.4 477.0 454.9 466.3 455.6 459.4 C456.3 452.5 460.4 448.4 461.1 442.8 C461.8 437.2 460.6 431.7 459.7 426.1 C458.8 420.5 454.4 416.8 455.6 409.4 C456.8 402.0 463.5 390.9 466.7 381.7 C469.9 372.4 480.1 358.1 475.0 353.9 C469.9 349.7 443.1 352.1 436.1 356.7Z" fill="url(#gm)" />
<path d="M488.9 353.9 C484.3 358.5 496.3 372.4 500.0 381.7 C503.7 390.9 510.0 401.1 511.1 409.4 C512.2 417.7 507.1 425.2 506.9 431.7 C506.7 438.2 508.1 442.8 509.7 448.3 C511.3 453.9 515.5 457.6 516.7 465.0 C517.9 472.4 516.7 485.9 516.7 492.8 C516.7 499.8 515.8 502.5 516.7 506.7 C517.6 510.9 518.5 514.8 522.2 517.8 C525.9 520.8 533.3 523.3 538.9 524.7 C544.5 526.1 551.7 526.8 555.6 526.1 C559.5 525.4 562.5 523.1 562.5 520.6 C562.5 518.1 558.6 515.0 555.6 510.8 C552.6 506.6 547.0 503.2 544.4 495.6 C541.8 488.0 540.1 473.3 540.3 465.0 C540.5 456.7 545.6 452.1 545.8 445.6 C546.0 439.1 543.3 432.1 541.7 426.1 C540.1 420.1 537.5 416.8 536.1 409.4 C534.7 402.0 534.7 390.9 533.3 381.7 C531.9 372.4 535.2 358.5 527.8 353.9 C520.4 349.3 493.5 349.3 488.9 353.9Z" fill="url(#gm)" />
<ellipse cx="443.5" cy="438" rx="17.5" ry="15" fill="url(#gd)" opacity=".8"/>
<ellipse cx="526" cy="437" rx="19" ry="15.5" fill="url(#gd)" opacity=".8"/>
<path d="M430.6 490.0 C424.8 491.9 425.2 497.4 422.2 501.1 C419.2 504.8 414.1 509.0 412.5 512.2 C410.9 515.5 410.4 518.8 412.5 520.6 C414.6 522.5 419.7 524.2 425.0 523.3 C430.3 522.4 438.8 518.2 444.4 515.0 C449.9 511.8 456.2 508.1 458.3 503.9 C460.4 499.7 461.6 492.3 457.0 490.0 C452.4 487.7 436.4 488.1 430.6 490.0Z" fill="url(#gd)" opacity=".85"/>
<path d="M516.7 495.0 C512.7 497.8 515.8 502.9 516.7 506.7 C517.6 510.5 518.5 514.8 522.2 517.8 C525.9 520.8 533.3 523.3 538.9 524.7 C544.5 526.1 551.7 526.8 555.6 526.1 C559.5 525.4 562.5 523.1 562.5 520.6 C562.5 518.1 558.6 515.0 555.6 510.8 C552.6 506.6 546.8 499.1 544.4 495.6 C542.0 492.1 545.6 490.1 541.0 490.0 C536.4 489.9 520.8 492.2 516.7 495.0Z" fill="url(#gd)" opacity=".85"/>
<path d="M459.7 470.6 L466.7 479 L459.7 487.2 L452.8 479Z M459.7 470.6 V487.2" stroke="#6ce6b0" stroke-width="1" fill="none"/>
<path d="M512.5 479 L518 488.5 L512.5 498 L507 488.5Z M512.5 479 V498" stroke="#6ce6b0" stroke-width="1" fill="none"/>
<path d="M440 506 L461 503 L455 520 M514 510 L530 526 L545 524" stroke="#6ce6b0" stroke-width="0.9" fill="none"/>
<path d="M452.0 288.0 C464.5 284.0 503.0 284.0 515.0 288.0 C527.0 292.0 522.7 303.8 524.0 312.0 C525.3 320.2 523.7 330.8 523.0 337.5 C522.3 344.2 523.8 348.9 520.0 352.0 C516.2 355.1 506.7 356.3 500.0 356.0 C493.3 355.7 486.7 350.0 480.0 350.0 C473.3 350.0 467.2 355.0 460.0 356.0 C452.8 357.0 440.5 359.1 437.0 356.0 C433.5 352.9 438.2 344.8 438.8 337.5 C439.2 330.2 437.8 320.2 440.0 312.0 C442.2 303.8 439.5 292.0 452.0 288.0Z" fill="url(#gd)" />
<rect x="537" y="262" width="26" height="18" rx="5" transform="rotate(45 550 271)" stroke="#6ce6b0" stroke-width="1" fill="none"/>
<rect x="553" y="276" width="26" height="16" rx="5" transform="rotate(45 566 284)" stroke="#6ce6b0" stroke-width="1" fill="none"/>
<ellipse cx="445.5" cy="306" rx="5.5" ry="7" stroke="#6af0b4" stroke-width="2" fill="none"/>
<ellipse cx="522" cy="309" rx="5.5" ry="7" stroke="#6af0b4" stroke-width="2" fill="none"/>
<path d="M450.0 211.7 C451.4 206.1 450.0 207.8 458.3 206.7 C466.6 205.6 491.7 204.4 500.0 205.0 C508.3 205.6 506.1 204.2 508.3 210.0 C510.5 215.8 512.5 230.8 513.3 240.0 C514.1 249.2 513.0 256.7 513.3 265.0 C513.6 273.3 519.9 285.5 515.0 290.0 C510.1 294.5 494.3 292.0 484.0 292.0 C473.7 292.0 458.4 294.5 453.3 290.0 C448.2 285.5 453.9 273.3 453.3 265.0 C452.8 256.7 450.6 248.9 450.0 240.0 C449.4 231.1 448.6 217.2 450.0 211.7Z" fill="url(#gt)" />
<path d="M458 212 L483.3 275 L505 211" stroke="#e8b0a8" stroke-width="1.6" fill="none" opacity=".85"/>
<path d="M452 212 L455 288 M508 211 L513 288" stroke="#64eaac" stroke-width="4" fill="none" opacity=".7"/>
<path d="M467.8 200.0 C473.8 198.0 497.9 198.0 503.9 200.0 C509.9 202.0 507.0 209.0 503.9 212.0 C500.8 215.0 491.0 218.0 485.0 218.0 C479.0 218.0 470.7 215.0 467.8 212.0 C464.9 209.0 461.8 202.0 467.8 200.0Z" fill="url(#pf)" />
<path d="M450.0 213.3 C453.8 211.6 457.7 210.2 458.0 213.0 C458.3 215.8 453.3 225.5 452.0 230.0 C450.7 234.5 450.9 235.6 450.0 240.0 C449.1 244.4 449.2 251.7 446.7 256.7 C444.2 261.7 439.2 265.6 435.0 270.0 C430.8 274.4 427.2 281.1 421.7 283.3 C416.1 285.5 403.9 285.0 401.7 283.3 C399.5 281.6 405.5 277.2 408.3 273.3 C411.1 269.4 415.2 264.7 418.3 260.0 C421.4 255.3 423.9 251.1 426.7 245.0 C429.5 238.9 431.1 228.6 435.0 223.3 C438.9 218.0 446.2 215.0 450.0 213.3Z" fill="url(#pm)" />
<path d="M406.7 270.0 C411.6 267.2 428.3 267.8 430.8 270.0 C433.3 272.2 423.5 278.3 421.7 283.3 C419.9 288.3 420.0 293.9 420.0 300.0 C420.0 306.1 420.6 314.2 421.7 320.0 C422.8 325.8 428.9 332.5 426.7 335.0 C424.5 337.5 411.9 337.5 408.3 335.0 C404.7 332.5 406.2 325.3 405.0 320.0 C403.8 314.7 401.4 308.9 400.8 303.3 C400.2 297.8 400.7 292.2 401.7 286.7 C402.7 281.1 401.8 272.8 406.7 270.0Z" fill="url(#pm)" />
<path d="M406.7 340.0 C403.4 336.1 395.6 340.6 390.0 341.7 C384.4 342.8 378.0 344.5 373.3 346.7 C368.6 348.9 364.8 351.7 361.7 355.0 C358.6 358.3 356.7 362.8 355.0 366.7 C353.3 370.6 352.1 375.2 351.7 378.3 C351.3 381.4 350.3 385.8 352.5 385.0 C354.7 384.2 360.1 376.4 365.0 373.3 C369.9 370.2 376.1 367.9 381.7 366.7 C387.2 365.4 393.6 366.1 398.3 365.8 C403.0 365.5 408.6 369.3 410.0 365.0 C411.4 360.7 410.0 343.9 406.7 340.0Z" fill="url(#pm)" />
<path d="M408.3 333.3 C411.6 329.4 421.4 335.6 426.7 336.7 C432.0 337.8 436.4 338.3 440.0 340.0 C443.6 341.7 446.6 344.5 448.3 346.7 C450.0 348.9 450.8 351.1 450.0 353.3 C449.2 355.5 446.6 358.1 443.3 360.0 C440.0 361.9 434.4 364.0 430.0 365.0 C425.6 366.0 420.6 366.6 416.7 365.8 C412.8 365.0 408.1 365.4 406.7 360.0 C405.3 354.6 405.0 337.2 408.3 333.3Z" fill="url(#pf)" />
<path d="M508.3 209.0 C509.0 204.2 516.9 210.8 520.0 213.0 C523.1 215.2 523.7 216.8 527.0 222.0 C530.3 227.2 535.2 237.3 540.0 244.0 C544.8 250.7 551.2 256.2 556.0 262.0 C560.8 267.8 565.2 274.1 568.6 278.9 C572.0 283.7 576.7 287.4 576.4 290.6 C576.1 293.9 570.3 298.7 566.7 298.4 C563.1 298.1 559.5 293.2 555.0 288.6 C550.5 284.0 544.2 275.9 540.0 271.0 C535.8 266.1 534.0 263.8 530.0 259.0 C526.0 254.2 519.6 250.3 516.0 242.0 C512.4 233.7 507.6 213.8 508.3 209.0Z" fill="url(#pm)" />
<path d="M584.0 320.0 L596.5 318.0 L627.0 369.0 L622.5 367.5Z" fill="url(#pf)" />
<path d="M566.7 298.4 C567.4 294.2 571.9 291.2 574.5 290.6 C577.1 290.0 579.1 291.6 582.3 294.5 C585.5 297.4 591.6 303.9 593.9 308.1 C596.2 312.3 596.5 316.9 595.9 319.8 C595.2 322.7 592.9 325.0 590.0 325.6 C587.1 326.2 581.6 325.3 578.4 323.7 C575.2 322.1 572.5 320.1 570.6 315.9 C568.7 311.7 566.1 302.6 566.7 298.4Z" fill="#e8aeaa" />
<path d="M453.4 97.0 C457.6 95.0 464.2 95.3 469.6 96.1 C475.0 96.8 481.1 100.0 485.9 101.5 C490.7 103.0 494.8 103.7 498.5 105.2 C502.2 106.7 506.0 108.3 508.4 110.6 C510.8 112.8 511.6 115.8 513.0 118.7 C514.4 121.6 515.2 125.0 516.6 127.7 C518.0 130.4 520.8 132.6 521.1 135.0 C521.4 137.4 519.8 139.8 518.4 142.2 C517.0 144.6 514.1 146.4 513.0 149.4 C511.9 152.4 511.8 155.7 511.5 160.0 C511.2 164.3 511.3 170.3 511.0 175.0 C510.7 179.7 510.5 184.0 509.5 188.0 C508.5 192.0 507.2 196.1 505.0 199.0 C502.8 201.9 500.2 204.2 496.0 205.5 C491.8 206.8 484.8 207.1 480.0 206.5 C475.2 205.9 470.8 204.1 467.0 202.0 C463.2 199.9 460.2 196.2 457.0 194.0 C453.8 191.8 450.2 192.0 448.0 189.0 C445.8 186.0 446.0 181.2 444.0 176.0 C442.0 170.8 437.9 163.0 436.0 158.0 C434.1 153.0 433.6 149.3 432.6 145.8 C431.6 142.3 430.0 139.8 429.9 136.8 C429.8 133.8 430.5 130.7 431.7 127.7 C432.9 124.7 435.0 122.0 437.1 118.7 C439.2 115.4 441.6 111.5 444.3 107.9 C447.0 104.3 449.2 99.0 453.4 97.0Z" fill="url(#pf)" />
<ellipse cx="462" cy="160" rx="9" ry="4" fill="#5a5050" opacity=".2"/>
<path d="M453.4 98.0 C457.6 96.3 464.2 96.9 469.6 97.5 C475.0 98.1 481.1 100.2 485.9 101.5 C490.7 102.8 494.8 103.7 498.5 105.2 C502.2 106.7 506.0 108.3 508.4 110.6 C510.8 112.8 511.6 115.8 513.0 118.7 C514.4 121.6 515.5 125.0 516.6 127.7 C517.7 130.4 519.4 132.6 519.5 135.0 C519.6 137.4 518.2 139.8 517.0 142.2 C515.8 144.6 516.5 148.6 512.0 149.4 C507.5 150.2 497.0 147.1 490.0 147.0 C483.0 146.9 476.7 148.3 470.0 149.0 C463.3 149.7 455.8 150.8 450.0 151.0 C444.2 151.2 438.2 152.4 435.0 150.0 C431.8 147.6 431.4 140.5 431.0 136.8 C430.6 133.1 431.5 130.7 432.5 127.7 C433.5 124.7 435.1 122.0 437.1 118.7 C439.1 115.4 441.6 111.4 444.3 107.9 C447.0 104.5 449.2 99.7 453.4 98.0Z" fill="#ecb4b0" />
<circle cx="453.4" cy="98.0" r="2.5" fill="#ecb4b0"/>
<circle cx="461.5" cy="97.8" r="3.0" fill="#ecb4b0"/>
<circle cx="469.6" cy="97.5" r="2.7" fill="#ecb4b0"/>
<circle cx="477.8" cy="99.5" r="3.0" fill="#ecb4b0"/>
<circle cx="485.9" cy="101.5" r="3.1" fill="#ecb4b0"/>
<circle cx="492.2" cy="103.3" r="2.3" fill="#ecb4b0"/>
<circle cx="498.5" cy="105.2" r="2.2" fill="#ecb4b0"/>
<circle cx="503.4" cy="107.9" r="3.4" fill="#ecb4b0"/>
<circle cx="508.4" cy="110.6" r="2.6" fill="#ecb4b0"/>
<circle cx="510.7" cy="114.7" r="2.5" fill="#ecb4b0"/>
<circle cx="513.0" cy="118.7" r="3.6" fill="#ecb4b0"/>
<circle cx="514.8" cy="123.2" r="2.9" fill="#ecb4b0"/>
<circle cx="516.6" cy="127.7" r="3.4" fill="#ecb4b0"/>
<circle cx="518.0" cy="131.3" r="2.9" fill="#ecb4b0"/>
<circle cx="519.5" cy="135.0" r="3.1" fill="#ecb4b0"/>
<circle cx="518.2" cy="138.6" r="2.4" fill="#ecb4b0"/>
<circle cx="431.0" cy="136.8" r="3.1" fill="#ecb4b0"/>
<circle cx="431.8" cy="132.2" r="3.4" fill="#ecb4b0"/>
<circle cx="432.5" cy="127.7" r="2.9" fill="#ecb4b0"/>
<circle cx="434.8" cy="123.2" r="3.2" fill="#ecb4b0"/>
<circle cx="437.1" cy="118.7" r="3.1" fill="#ecb4b0"/>
<circle cx="440.7" cy="113.3" r="2.3" fill="#ecb4b0"/>
<circle cx="444.3" cy="107.9" r="3.3" fill="#ecb4b0"/>
<circle cx="448.9" cy="103.0" r="3.0" fill="#ecb4b0"/>
<path d="M437 151 Q470 142 510 152" stroke="#8a7474" stroke-width="2.5" fill="none" opacity=".45"/>
<ellipse cx="442" cy="177.5" rx="5.5" ry="9.5" fill="url(#pf)" stroke="#eab0ac" stroke-width="1.3"/>
<path d="M402 129 L541 104" stroke="#a8d8b8" stroke-width="0.8" opacity=".6"/>
<path d="M582 300 L592 290 L593 300Z" stroke="#6ce6b0" stroke-width="1" fill="none"/>
<path d="M598 299 l5 5 M603 299 l-5 5" stroke="#6ce6b0" stroke-width="1.1"/>
<ellipse cx="409" cy="282.5" rx="15.5" ry="5.5" stroke="#6ce6b0" stroke-width="1.1" fill="none"/>
<ellipse cx="413" cy="312.5" rx="17.5" ry="5.5" stroke="#6ce6b0" stroke-width="0.9" fill="none"/>
</svg>
<svg style="left:1108px;top:100px" width="40" height="36"><path d="M2.5 6.3 L20 3.5 L36.3 6.3 L20 9.5 Z" fill="#dcdcdc"/><path d="M2.5 6.3 L20 9.5 L20 33.5 L3 28.8 Z" fill="#cdcdcd"/><path d="M20 9.5 L36.3 6.3 L35.6 28.8 L20 33.5Z" fill="#c2c2c2"/><path d="M20 9.5 V33.5" stroke="#9a9a9a" stroke-width=".6"/><text x="6" y="22" font-size="4" fill="#7a7a7a" font-family="Liberation Sans">LEFT</text><text x="22" y="21" font-size="3.6" fill="#7a7a7a" font-family="Liberation Sans">FRONT</text></svg>
<span class="t" style="left:1049px;top:563.00px;font-size:6px;color:#f0f0f0;letter-spacing:-0.2px;font-weight:700;line-height:10px;">Frame:</span>
<span class="t" style="left:1108px;top:563.00px;font-size:6px;color:#f0f0f0;letter-spacing:-0.45px;font-weight:700;line-height:10px;">0</span>
<span class="t" style="left:1124px;top:573.50px;font-size:6.5px;color:#f0f0f0;letter-spacing:-0.2px;font-weight:700;line-height:10px;">0.4 fps</span>
<span class="t" style="left:565px;top:572.50px;font-size:5.5px;color:#f0f0f0;letter-spacing:-0.2px;font-weight:700;line-height:10px;">persp</span>
<svg style="left:4px;top:566px" width="12" height="16"><path d="M4 2 v11 h6" stroke="#2a6" stroke-width="1" fill="none"/><path d="M4 13 l5 -3" stroke="#c33" stroke-width="1"/><circle cx="7" cy="12" r="1.5" fill="#33c"/><circle cx="4" cy="2" r="1" fill="#3c3"/></svg>
<div style="left:1158px;top:64px;width:3px;height:524px;background:#3a3a3a;"></div>
<div style="left:0px;top:586px;width:1161px;height:2px;background:#383838;"></div>
<div style="left:1161px;top:65px;width:119px;height:523px;background:#444444;"></div>
<div style="left:1249px;top:66px;width:10px;height:12px;background:transparent;"></div>
<span class="t" style="left:1166px;top:77.60px;font-size:6.2px;color:#d0d0d0;letter-spacing:-0.45px;font-weight:400;line-height:10px;">Channels</span>
<span class="t" style="left:1197px;top:77.60px;font-size:6.2px;color:#d0d0d0;letter-spacing:-0.45px;font-weight:400;line-height:10px;">Edit</span>
<span class="t" style="left:1215px;top:77.60px;font-size:6.2px;color:#d0d0d0;letter-spacing:-0.45px;font-weight:400;line-height:10px;">Object</span>
<span class="t" style="left:1240px;top:77.60px;font-size:6.2px;color:#d0d0d0;letter-spacing:-0.45px;font-weight:400;line-height:10px;">Show</span>
<svg style="left:1265px;top:67px" width="15" height="10"><circle cx="4" cy="3" r="1.2" fill="#5c5"/><circle cx="2" cy="7" r="1.2" fill="#c44"/><circle cx="6" cy="7" r="1.2" fill="#46c"/><path d="M2 7 L4 3 L6 7" stroke="#ccc" stroke-width=".6" fill="none"/><circle cx="13" cy="5" r="3" fill="none" stroke="#4cc" stroke-width="1.5"/></svg>
<span class="t" style="left:1163px;top:89.60px;font-size:6px;color:#e0e0e0;letter-spacing:-0.2px;font-weight:700;line-height:10px;">rig</span>
<div style="left:1251px;top:97.5px;width:3.6px;height:75px;background:#6a7280;"></div>
<div style="left:1258.5px;top:98.39999999999999px;width:21.5px;height:7.6px;background:#2e2e2e;"></div>
<span class="t" style="right:32px;top:97.10px;font-size:6.2px;color:#dadada;letter-spacing:-0.3px;font-weight:400;line-height:10px">Translate X</span>
<span class="t" style="left:1255px;top:97.10px;font-size:6.2px;color:#e4e4e4;letter-spacing:-0.3px;font-weight:400;line-height:10px;">0</span>
<div style="left:1258.5px;top:106.80999999999999px;width:21.5px;height:7.6px;background:#2e2e2e;"></div>
<span class="t" style="right:32px;top:105.51px;font-size:6.2px;color:#dadada;letter-spacing:-0.3px;font-weight:400;line-height:10px">Translate Y</span>
<span class="t" style="left:1255px;top:105.51px;font-size:6.2px;color:#e4e4e4;letter-spacing:-0.3px;font-weight:400;line-height:10px;">0</span>
<div style="left:1258.5px;top:115.21999999999998px;width:21.5px;height:7.6px;background:#2e2e2e;"></div>
<span class="t" style="right:32px;top:113.92px;font-size:6.2px;color:#dadada;letter-spacing:-0.3px;font-weight:400;line-height:10px">Translate Z</span>
<span class="t" style="left:1255px;top:113.92px;font-size:6.2px;color:#e4e4e4;letter-spacing:-0.3px;font-weight:400;line-height:10px;">0</span>
<div style="left:1258.5px;top:123.63px;width:21.5px;height:7.6px;background:#2e2e2e;"></div>
<span class="t" style="right:32px;top:122.33px;font-size:6.2px;color:#dadada;letter-spacing:-0.3px;font-weight:400;line-height:10px">Rotate X</span>
<span class="t" style="left:1255px;top:122.33px;font-size:6.2px;color:#e4e4e4;letter-spacing:-0.3px;font-weight:400;line-height:10px;">0</span>
<div style="left:1258.5px;top:132.04000000000002px;width:21.5px;height:7.6px;background:#2e2e2e;"></div>
<span class="t" style="right:32px;top:130.74px;font-size:6.2px;color:#dadada;letter-spacing:-0.3px;font-weight:400;line-height:10px">Rotate Y</span>
<span class="t" style="left:1255px;top:130.74px;font-size:6.2px;color:#e4e4e4;letter-spacing:-0.3px;font-weight:400;line-height:10px;">0</span>
<div style="left:1258.5px;top:140.45px;width:21.5px;height:7.6px;background:#2e2e2e;"></div>
<span class="t" style="right:32px;top:139.15px;font-size:6.2px;color:#dadada;letter-spacing:-0.3px;font-weight:400;line-height:10px">Rotate Z</span>
<span class="t" style="left:1255px;top:139.15px;font-size:6.2px;color:#e4e4e4;letter-spacing:-0.3px;font-weight:400;line-height:10px;">0</span>
<div style="left:1258.5px;top:148.86px;width:21.5px;height:7.6px;background:#2e2e2e;"></div>
<span class="t" style="right:32px;top:147.56px;font-size:6.2px;color:#dadada;letter-spacing:-0.3px;font-weight:400;line-height:10px">Scale X</span>
<span class="t" style="left:1255px;top:147.56px;font-size:6.2px;color:#e4e4e4;letter-spacing:-0.3px;font-weight:400;line-height:10px;">1</span>
<div style="left:1258.5px;top:157.27px;width:21.5px;height:7.6px;background:#2e2e2e;"></div>
<span class="t" style="right:32px;top:155.97px;font-size:6.2px;color:#dadada;letter-spacing:-0.3px;font-weight:400;line-height:10px">Scale Y</span>
<span class="t" style="left:1255px;top:155.97px;font-size:6.2px;color:#e4e4e4;letter-spacing:-0.3px;font-weight:400;line-height:10px;">1</span>
<div style="left:1258.5px;top:165.68px;width:21.5px;height:7.6px;background:#2e2e2e;"></div>
<span class="t" style="right:32px;top:164.38px;font-size:6.2px;color:#dadada;letter-spacing:-0.3px;font-weight:400;line-height:10px">Scale Z</span>
<span class="t" style="left:1255px;top:164.38px;font-size:6.2px;color:#e4e4e4;letter-spacing:-0.3px;font-weight:400;line-height:10px;">1</span>
<div style="left:1258.5px;top:174.09px;width:21.5px;height:7.6px;background:#2e2e2e;"></div>
<span class="t" style="right:32px;top:172.79px;font-size:6.2px;color:#dadada;letter-spacing:-0.3px;font-weight:400;line-height:10px">Visibility</span>
<span class="t" style="left:1255px;top:172.79px;font-size:6.2px;color:#e4e4e4;letter-spacing:-0.3px;font-weight:400;line-height:10px;">on</span>
<div style="left:1258.5px;top:182.5px;width:21.5px;height:7.6px;background:#2e2e2e;"></div>
<span class="t" style="right:32px;top:181.20px;font-size:6.2px;color:#dadada;letter-spacing:-0.3px;font-weight:400;line-height:10px">Is Rig</span>
<span class="t" style="left:1255px;top:181.20px;font-size:6.2px;color:#e4e4e4;letter-spacing:-0.3px;font-weight:400;line-height:10px;">on</span>
<div style="left:1258.5px;top:190.91000000000003px;width:21.5px;height:7.6px;background:#2e2e2e;"></div>
<span class="t" style="right:32px;top:189.61px;font-size:6.2px;color:#dadada;letter-spacing:-0.3px;font-weight:400;line-height:10px">Ctl Vis</span>
<span class="t" style="left:1255px;top:189.61px;font-size:6.2px;color:#e4e4e4;letter-spacing:-0.3px;font-weight:400;line-height:10px;">on</span>
<div style="left:1258.5px;top:199.32px;width:21.5px;height:7.6px;background:#2e2e2e;"></div>
<span class="t" style="right:32px;top:198.02px;font-size:6.2px;color:#dadada;letter-spacing:-0.3px;font-weight:400;line-height:10px">Ctl Vis On Playback</span>
<span class="t" style="left:1255px;top:198.02px;font-size:6.2px;color:#e4e4e4;letter-spacing:-0.3px;font-weight:400;line-height:10px;">on</span>
<div style="left:1258.5px;top:207.73000000000002px;width:21.5px;height:7.6px;background:#2e2e2e;"></div>
<span class="t" style="right:32px;top:206.43px;font-size:6.2px;color:#dadada;letter-spacing:-0.3px;font-weight:400;line-height:10px">Jnt Vis</span>
<span class="t" style="left:1255px;top:206.43px;font-size:6.2px;color:#e4e4e4;letter-spacing:-0.3px;font-weight:400;line-height:10px;">off</span>
<div style="left:1258.5px;top:216.14000000000001px;width:21.5px;height:7.6px;background:#2e2e2e;"></div>
<span class="t" style="right:32px;top:214.84px;font-size:6.2px;color:#dadada;letter-spacing:-0.3px;font-weight:400;line-height:10px">Geo Selectable</span>
<span class="t" style="left:1255px;top:214.84px;font-size:6.2px;color:#e4e4e4;letter-spacing:-0.3px;font-weight:400;line-height:10px;">on</span>
<div style="left:1258.5px;top:224.55px;width:21.5px;height:7.6px;background:#2e2e2e;"></div>
<span class="t" style="right:32px;top:223.25px;font-size:6.2px;color:#dadada;letter-spacing:-0.3px;font-weight:400;line-height:10px">Rig Version</span>
<span class="t" style="left:1255px;top:223.25px;font-size:6.2px;color:#e4e4e4;letter-spacing:-0.3px;font-weight:400;line-height:10px;">1.5</span>
<div style="left:1258.5px;top:232.96px;width:21.5px;height:7.6px;background:#2e2e2e;"></div>
<span class="t" style="right:32px;top:231.66px;font-size:6.2px;color:#dadada;letter-spacing:-0.3px;font-weight:400;line-height:10px">Maya Version</span>
<span class="t" style="left:1255px;top:231.66px;font-size:6.2px;color:#e4e4e4;letter-spacing:-0.3px;font-weight:400;line-height:10px;">2020</span>
<div style="left:1258.5px;top:241.37px;width:21.5px;height:7.6px;background:#2e2e2e;"></div>
<span class="t" style="right:32px;top:240.07px;font-size:6.2px;color:#dadada;letter-spacing:-0.3px;font-weight:400;line-height:10px">Release Date</span>
<span class="t" style="left:1255px;top:240.07px;font-size:6.2px;color:#e4e4e4;letter-spacing:-0.3px;font-weight:400;line-height:10px;">20230721</span>
<div style="left:1163px;top:100px;width:2px;height:233px;background:#3e3e3e;"></div>
<span class="t" style="left:1163px;top:248.00px;font-size:5.8px;color:#d8d8d8;letter-spacing:-0.2px;font-weight:700;line-height:10px;">OUTPUTS</span>
<span class="t" style="left:1167.5px;top:256.50px;font-size:5.6px;color:#d4d4d4;letter-spacing:-0.25px;font-weight:700;line-height:10px;">bindPose2</span>
<span class="t" style="left:1167.5px;top:264.90px;font-size:5.6px;color:#d4d4d4;letter-spacing:-0.25px;font-weight:700;line-height:10px;">bindPose1</span>
<span class="t" style="left:1167.5px;top:273.30px;font-size:5.6px;color:#d4d4d4;letter-spacing:-0.25px;font-weight:700;line-height:10px;">bindPose3</span>
<span class="t" style="left:1167.5px;top:281.70px;font-size:5.6px;color:#d4d4d4;letter-spacing:-0.25px;font-weight:700;line-height:10px;">bindPose4</span>
<span class="t" style="left:1167.5px;top:290.10px;font-size:5.6px;color:#d4d4d4;letter-spacing:-0.25px;font-weight:700;line-height:10px;">bindPose5</span>
<span class="t" style="left:1167.5px;top:298.50px;font-size:5.6px;color:#d4d4d4;letter-spacing:-0.25px;font-weight:700;line-height:10px;">bindPose6</span>
<span class="t" style="left:1167.5px;top:306.90px;font-size:5.6px;color:#d4d4d4;letter-spacing:-0.25px;font-weight:700;line-height:10px;">bindPose7</span>
<span class="t" style="left:1167.5px;top:315.30px;font-size:5.6px;color:#d4d4d4;letter-spacing:-0.25px;font-weight:700;line-height:10px;">bindPose8</span>
<span class="t" style="left:1167.5px;top:323.70px;font-size:5.6px;color:#d4d4d4;letter-spacing:-0.25px;font-weight:700;line-height:10px;">bindPose9</span>
<div style="left:1161px;top:334px;width:119px;height:1px;background:#3a3a3a;"></div>
<div style="left:1162px;top:336px;width:118px;height:10px;background:#404040;"></div>
<div style="left:1162px;top:336px;width:30px;height:10px;background:#4a4a4a;"></div>
<span class="t" style="left:1168px;top:335.80px;font-size:6px;color:#c8c8c8;letter-spacing:-0.45px;font-weight:400;line-height:10px;">Display</span>
<span class="t" style="left:1198px;top:335.80px;font-size:6px;color:#c8c8c8;letter-spacing:-0.45px;font-weight:400;line-height:10px;">Anim</span>
<span class="t" style="left:1168px;top:346.00px;font-size:6px;color:#c8c8c8;letter-spacing:-0.45px;font-weight:400;line-height:10px;">Layers</span>
<span class="t" style="left:1191.7px;top:346.00px;font-size:6px;color:#c8c8c8;letter-spacing:-0.45px;font-weight:400;line-height:10px;">Options</span>
<span class="t" style="left:1220px;top:346.00px;font-size:6px;color:#c8c8c8;letter-spacing:-0.45px;font-weight:400;line-height:10px;">Help</span>
<svg style="left:1252px;top:358px" width="9" height="7"><path d="M0 3.5 L4 0.5 L4 6.5Z M4 3.5 L8 0.5 L8 6.5Z" fill="#7cc4d0"/></svg>
<svg style="left:1262px;top:358px" width="9" height="7"><path d="M0 3.5 L4 0.5 L4 6.5Z M4 3.5 L8 0.5 L8 6.5Z" fill="#7cc4d0"/></svg>
<svg style="left:1273px;top:358px" width="9" height="7"><path d="M0 3.5 L4 0.5 L4 6.5Z M4 3.5 L8 0.5 L8 6.5Z" fill="#7cc4d0"/></svg>
<div style="left:1163.5px;top:369px;width:116.5px;height:239px;background:#303030;"></div>
<div style="left:1162px;top:369px;width:118px;height:1px;background:#3a3a3a;"></div>
<span class="t" style="left:1168px;top:370.00px;font-size:5.8px;color:#f0f0f0;letter-spacing:-0.45px;font-weight:700;line-height:10px;">V</span>
<span class="t" style="left:1179.4px;top:370.00px;font-size:5.8px;color:#f0f0f0;letter-spacing:-0.45px;font-weight:700;line-height:10px;">P</span>
<span class="t" style="left:1192px;top:370.00px;font-size:5.8px;color:#f0f0f0;letter-spacing:-0.45px;font-weight:700;line-height:10px;">T</span>
<div style="left:1199px;top:371.0px;width:8.5px;height:8.5px;background:#b07ee0;"></div>
<span class="t" style="left:1208.75px;top:370.00px;font-size:5.8px;color:#f0f0f0;letter-spacing:-0.3px;font-weight:700;line-height:10px;">Props</span>
<span class="t" style="left:1168px;top:380.60px;font-size:5.8px;color:#f0f0f0;letter-spacing:-0.45px;font-weight:700;line-height:10px;">V</span>
<span class="t" style="left:1179.4px;top:380.60px;font-size:5.8px;color:#f0f0f0;letter-spacing:-0.45px;font-weight:700;line-height:10px;">P</span>
<span class="t" style="left:1192px;top:380.60px;font-size:5.8px;color:#f0f0f0;letter-spacing:-0.45px;font-weight:700;line-height:10px;">T</span>
<div style="left:1199px;top:381.6px;width:8.5px;height:8.5px;background:#a0583e;"></div>
<span class="t" style="left:1208.75px;top:380.60px;font-size:5.8px;color:#f0f0f0;letter-spacing:-0.3px;font-weight:700;line-height:10px;">head_Geo</span>
<span class="t" style="left:1168px;top:391.20px;font-size:5.8px;color:#f0f0f0;letter-spacing:-0.45px;font-weight:700;line-height:10px;">V</span>
<span class="t" style="left:1179.4px;top:391.20px;font-size:5.8px;color:#f0f0f0;letter-spacing:-0.45px;font-weight:700;line-height:10px;">P</span>
<div style="left:1199px;top:392.2px;width:8.5px;height:8.5px;background:#1a4aa8;"></div>
<span class="t" style="left:1208.75px;top:391.20px;font-size:5.8px;color:#f0f0f0;letter-spacing:-0.3px;font-weight:700;line-height:10px;">clothing</span>
<span class="t" style="left:1168px;top:401.80px;font-size:5.8px;color:#f0f0f0;letter-spacing:-0.45px;font-weight:700;line-height:10px;">V</span>
<span class="t" style="left:1179.4px;top:401.80px;font-size:5.8px;color:#f0f0f0;letter-spacing:-0.45px;font-weight:700;line-height:10px;">P</span>
<div style="left:1199px;top:402.8px;width:8.5px;height:8.5px;background:#9a9a9a;"></div>
<span class="t" style="left:1208.75px;top:401.80px;font-size:5.8px;color:#f0f0f0;letter-spacing:-0.3px;font-weight:700;line-height:10px;">floor</span>
<span class="t" style="left:1192px;top:412.40px;font-size:5.8px;color:#f0f0f0;letter-spacing:-0.45px;font-weight:700;line-height:10px;">T</span>
<div style="left:1199px;top:413.4px;width:8.5px;height:8.5px;background:#e01010;"></div>
<span class="t" style="left:1208.75px;top:412.40px;font-size:5.8px;color:#f0f0f0;letter-spacing:-0.3px;font-weight:700;line-height:10px;">Cape</span>
<div style="left:1166px;top:602px;width:90px;height:5px;background:#6a6a6a;;border-radius:2px"></div>
<svg style="left:1163px;top:602px" width="4" height="5"><path d="M3 0 L0 2.5 L3 5Z" fill="#ddd"/></svg>
<div style="left:1161px;top:610px;width:119px;height:1px;background:#3a3a3a;"></div>
<div style="left:0px;top:588px;width:1161px;height:23px;background:#474747;"></div>
<svg style="left:3px;top:593px" width="12" height="14"><path d="M3 4 v5 a3 3 0 0 0 6 0 v-5" stroke="#f0f0f0" stroke-width="2" fill="none"/><rect x="2" y="1" width="2" height="2" fill="#e07020"/><rect x="8" y="1" width="2" height="2" fill="#c0d020"/></svg>
<div style="left:169px;top:599px;width:5px;height:2px;background:#5fba70;"></div>
<div style="left:178px;top:594px;width:25px;height:11px;background:#2e2e2e;;border-radius:2px"></div>
<span class="t" style="left:181px;top:594.50px;font-size:5.8px;color:#e0e0e0;letter-spacing:-0.45px;font-weight:400;line-height:10px;">0.001</span>
<svg style="left:205px;top:594px" width="9" height="11"><path d="M4.5 1 v9 M0 5.5 h9" stroke="#5fcf70" stroke-width="2"/></svg>
<svg style="left:219px;top:594px" width="22" height="11"><path d="M2 5 h6 M4 3 l-2 2 l2 2 M1 9 h8" stroke="#5fcf70" stroke-width="1.2" fill="none"/><path d="M13 5 h6 M17 3 l2 2 l-2 2 M12 9 h8" stroke="#5fcf70" stroke-width="1.2" fill="none"/></svg>
<div style="left:243px;top:594px;width:18px;height:11px;background:#2e2e2e;;border-radius:2px"></div>
<span class="t" style="left:246px;top:594.50px;font-size:5.8px;color:#e0e0e0;letter-spacing:-0.45px;font-weight:400;line-height:10px;">2</span>
<svg style="left:265px;top:594px" width="9" height="10"><circle cx="4.5" cy="5.5" r="3.5" stroke="#5fcf70" stroke-width="1.5" fill="none"/><path d="M4.5 0.5 v4" stroke="#5fcf70" stroke-width="1.5"/></svg>
<svg style="left:279px;top:594px" width="10" height="11"><path d="M5 1 L9 6 L1 6Z" fill="#5fcf70"/><rect x="2" y="7" width="6" height="2" fill="#ddd"/></svg>
<div style="left:293px;top:596px;width:2px;height:2px;background:#5fcf70;"></div>
<div style="left:293px;top:600px;width:2px;height:2px;background:#5fcf70;"></div>
<div style="left:296px;top:596px;width:2px;height:2px;background:#5fcf70;"></div>
<div style="left:296px;top:600px;width:2px;height:2px;background:#5fcf70;"></div>
<div style="left:299px;top:596px;width:2px;height:2px;background:#5fcf70;"></div>
<div style="left:299px;top:600px;width:2px;height:2px;background:#5fcf70;"></div>
<div style="left:311px;top:598px;width:3px;height:3px;background:#5fcf70;"></div>
<div style="left:323px;top:599px;width:1.5px;height:1.5px;background:#5faa70;"></div>
<div style="left:334px;top:599px;width:1.5px;height:1.5px;background:#5faa70;"></div>
<div style="left:345px;top:599px;width:1.5px;height:1.5px;background:#5faa70;"></div>
<div style="left:355px;top:594px;width:12px;height:11px;background:#4e4e4e;;border-radius:2px"></div>
<span class="t" style="left:356.5px;top:594.50px;font-size:5.5px;color:#5fcf70;letter-spacing:-0.45px;font-weight:400;line-height:10px;">EA</span>
<div style="left:371px;top:599px;width:1.5px;height:1.5px;background:#5faa70;"></div>
<div style="left:381px;top:599px;width:1.5px;height:1.5px;background:#5faa70;"></div>
<div style="left:392px;top:599px;width:1.5px;height:1.5px;background:#5faa70;"></div>
<div style="left:402px;top:598px;width:3px;height:3px;background:#5fcf70;"></div>
<div style="left:421px;top:598px;width:3px;height:3px;background:#e0d020;"></div>
<div style="left:431px;top:599px;width:1.5px;height:1.5px;background:#c0b030;"></div>
<div style="left:440px;top:599px;width:1.5px;height:1.5px;background:#c0b030;"></div>
<div style="left:449px;top:599px;width:1.5px;height:1.5px;background:#c0b030;"></div>
<div style="left:458px;top:599px;width:1.5px;height:1.5px;background:#c0b030;"></div>
<div style="left:463px;top:594px;width:14px;height:11px;background:#4e4e4e;;border-radius:2px"></div>
<span class="t" style="left:465px;top:594.50px;font-size:5.5px;color:#e0c020;letter-spacing:-0.45px;font-weight:400;line-height:10px;">TH</span>
<div style="left:481px;top:599px;width:1.5px;height:1.5px;background:#c0b030;"></div>
<div style="left:490px;top:599px;width:1.5px;height:1.5px;background:#c0b030;"></div>
<div style="left:499px;top:599px;width:1.5px;height:1.5px;background:#c0b030;"></div>
<div style="left:508px;top:599px;width:1.5px;height:1.5px;background:#c0b030;"></div>
<div style="left:515px;top:598px;width:3px;height:3px;background:#e0d020;"></div>
<svg style="left:528px;top:593px" width="88" height="14"><path d="M2 10 C4 2 8 2 9 10 M13 10 C18 10 14 3 19 3 M23 3 C28 3 24 10 29 10 M33 10 C34 3 38 3 39 10 M42 9 L46 9 L50 5 L54 5 M57 3 L63 10 M67 10 L70 10 L70 4 L74 4" stroke="#e0703a" stroke-width="1.6" fill="none"/></svg>
<div style="left:631px;top:597px;width:3px;height:4px;background:#d04040;"></div>
<div style="left:629px;top:602px;width:7px;height:1px;background:#aaa;"></div>
<div style="left:643px;top:597px;width:3px;height:4px;background:#e0d020;"></div>
<div style="left:641px;top:602px;width:7px;height:1px;background:#aaa;"></div>
<div style="left:655px;top:597px;width:3px;height:4px;background:#40c040;"></div>
<div style="left:653px;top:602px;width:7px;height:1px;background:#aaa;"></div>
<svg style="left:672px;top:593px" width="135" height="14"><path d="M3 2 V7 M3 8 L7 12" stroke="#ddd" stroke-width="1.2"/><rect x="14" y="3" width="9" height="5" fill="#b48ee6"/><path d="M20 8 L23 12" stroke="#ddd" stroke-width="1.2"/><path d="M29 3 L26 7 L29 11 M33 3 L36 7 L33 11" stroke="#b48ee6" stroke-width="1.5" fill="none"/><path d="M36 9 L39 12" stroke="#ddd"/><circle cx="45" cy="3" r="1.3" fill="#b48ee6"/><path d="M45 4 L43 8 L40 10 M43 8 L47 10 M44 6 L47 5" stroke="#b48ee6" stroke-width="1.3" fill="none"/><path d="M56 2 V11 M52 6 H60 M54 11 L56 8 L58 11" stroke="#b48ee6" stroke-width="1.4" fill="none"/><circle cx="81" cy="6" r="3.5" fill="none" stroke="#e08ed0" stroke-width="1.5"/><path d="M77 11 H85" stroke="#e08ed0" stroke-width="1.5"/><path d="M89 3 H93 V6 H97 V11 H89Z" fill="#e08ed0"/><circle cx="104" cy="4.5" r="2" fill="none" stroke="#e08ed0" stroke-width="1.3"/><circle cx="104" cy="9" r="2" fill="none" stroke="#e08ed0" stroke-width="1.3"/><circle cx="116" cy="7" r="3.5" fill="#e08ed0" opacity=".8"/><path d="M112.5 7 H119.5 M116 3.5 V10.5" stroke="#555" stroke-width=".8"/><rect x="126" y="2" width="7" height="9" fill="#d8a0c8" opacity=".8"/><path d="M130 8 L134 12" stroke="#ddd"/></svg>
<div style="left:819px;top:598px;width:3px;height:3px;background:#e080d0;"></div>
<div style="left:830px;top:599px;width:1.5px;height:1.5px;background:#bb77bb;"></div>
<div style="left:841px;top:599px;width:1.5px;height:1.5px;background:#bb77bb;"></div>
<div style="left:851px;top:599px;width:1.5px;height:1.5px;background:#bb77bb;"></div>
<div style="left:861px;top:594px;width:9px;height:10px;background:#4e4e4e;;border-radius:2px"></div>
<div style="left:863px;top:597px;width:5px;height:4px;background:#e090d0;"></div>
<div style="left:876px;top:599px;width:1.5px;height:1.5px;background:#bb77bb;"></div>
<div style="left:887px;top:599px;width:1.5px;height:1.5px;background:#bb77bb;"></div>
<div style="left:898px;top:599px;width:1.5px;height:1.5px;background:#bb77bb;"></div>
<div style="left:908px;top:598px;width:3px;height:3px;background:#e080d0;"></div>
<svg style="left:924px;top:593px" width="100" height="14"><path d="M7 1 V13 M1 7 H13" stroke="#50c0d0" stroke-width="1.3"/><circle cx="7" cy="7" r="3" fill="#50c0d0"/><path d="M24 2 V8 L19 12 M24 8 L29 10" stroke="#50c0d0" stroke-width="1.6" fill="none"/><path d="M33 3 L41 11" stroke="#50c0d0" stroke-width="3"/><path d="M51 2 L56 7 L51 12 L46 7Z" fill="#50c0d0"/><path d="M64 12 L67 3 L70 8 L73 3" stroke="#e04848" stroke-width="1.5" fill="none"/><path d="M78 2 H86 V12 L82 9 L78 12Z" fill="#e04848"/><path d="M92 2 L99 7 L92 9Z" fill="#e04848"/><path d="M92 12 H99" stroke="#ddd" stroke-dasharray="1 1.5"/></svg>
<div style="left:1039px;top:599px;width:2px;height:2px;background:#4a9ad0;"></div>
<div style="left:1042px;top:599px;width:2px;height:2px;background:#4a9ad0;"></div>
<div style="left:1045px;top:599px;width:2px;height:2px;background:#4a9ad0;"></div>
<div style="left:1058px;top:593px;width:11px;height:13px;background:#6a6a6a;;border-radius:1px"></div>
<span class="t" style="left:1060px;top:594.50px;font-size:7px;color:#e0e0e0;letter-spacing:-0.45px;font-weight:400;line-height:10px;">C</span>
<svg style="left:1072px;top:593px" width="80" height="14"><path d="M1 5 H10 M1 9 H10" stroke="#ddd" stroke-width="1"/><rect x="3" y="3.5" width="2" height="3" fill="#ddd"/><rect x="6" y="7.5" width="2" height="3" fill="#ddd"/><rect x="14" y="2" width="9" height="10" fill="none" stroke="#ddd" stroke-width="1.2"/><path d="M14 5 H23 M14 8 H23" stroke="#ddd"/><path d="M28 2 V6 M31 2 V6 M28 6 H32 L30 12" stroke="#ddd" stroke-width="1.5" fill="none"/><path d="M46 12 L40 6 A2.5 2.5 0 0 1 46 3.5 A2.5 2.5 0 0 1 52 6Z" fill="#e0e0e0"/><path d="M61 2 L66 4.5 V9.5 L61 12 L56 9.5 V4.5Z" fill="#d8d8d8"/><circle cx="73" cy="6" r="3" fill="none" stroke="#e0e0e0" stroke-width="1.5"/><path d="M75 8 L78 12" stroke="#e0e0e0" stroke-width="1.8"/></svg>
<div style="left:1161px;top:611px;width:119px;height:0px;background:#444;"></div>
<div style="left:0px;top:611px;width:1155px;height:6px;background:#484848;"></div>
<div style="left:0px;top:617px;width:1155px;height:57px;background:#2e2e2e;"></div>
<div style="left:0px;top:674px;width:1155px;height:5px;background:#484848;"></div>
<div style="left:1155px;top:611px;width:125px;height:68px;background:#474747;"></div>
<div style="left:1px;top:649px;width:1px;height:25px;background:#868686;"></div>
<div style="left:1px;top:611px;width:1px;height:6px;background:#5e5e5e;"></div>
<div style="left:1px;top:674px;width:1px;height:5px;background:#5e5e5e;"></div>
<span class="t" style="left:5.0px;top:615.60px;font-size:5.8px;color:#d0d0d0;letter-spacing:-0.2px;font-weight:400;line-height:10px;">1</span>
<div style="left:20px;top:649px;width:1px;height:25px;background:#868686;"></div>
<div style="left:20px;top:611px;width:1px;height:6px;background:#5e5e5e;"></div>
<div style="left:20px;top:674px;width:1px;height:5px;background:#5e5e5e;"></div>
<span class="t" style="left:24.165px;top:615.60px;font-size:5.8px;color:#d0d0d0;letter-spacing:-0.2px;font-weight:400;line-height:10px;">2</span>
<div style="left:39px;top:649px;width:1px;height:25px;background:#868686;"></div>
<div style="left:39px;top:611px;width:1px;height:6px;background:#5e5e5e;"></div>
<div style="left:39px;top:674px;width:1px;height:5px;background:#5e5e5e;"></div>
<span class="t" style="left:43.33px;top:615.60px;font-size:5.8px;color:#d0d0d0;letter-spacing:-0.2px;font-weight:400;line-height:10px;">3</span>
<div style="left:58px;top:649px;width:1px;height:25px;background:#868686;"></div>
<div style="left:58px;top:611px;width:1px;height:6px;background:#5e5e5e;"></div>
<div style="left:58px;top:674px;width:1px;height:5px;background:#5e5e5e;"></div>
<span class="t" style="left:62.495px;top:615.60px;font-size:5.8px;color:#d0d0d0;letter-spacing:-0.2px;font-weight:400;line-height:10px;">4</span>
<div style="left:78px;top:649px;width:1px;height:25px;background:#868686;"></div>
<div style="left:78px;top:611px;width:1px;height:6px;background:#5e5e5e;"></div>
<div style="left:78px;top:674px;width:1px;height:5px;background:#5e5e5e;"></div>
<span class="t" style="left:81.66px;top:615.60px;font-size:5.8px;color:#d0d0d0;letter-spacing:-0.2px;font-weight:400;line-height:10px;">5</span>
<div style="left:97px;top:649px;width:1px;height:25px;background:#868686;"></div>
<div style="left:97px;top:611px;width:1px;height:6px;background:#5e5e5e;"></div>
<div style="left:97px;top:674px;width:1px;height:5px;background:#5e5e5e;"></div>
<span class="t" style="left:100.82499999999999px;top:615.60px;font-size:5.8px;color:#d0d0d0;letter-spacing:-0.2px;font-weight:400;line-height:10px;">6</span>
<div style="left:116px;top:649px;width:1px;height:25px;background:#868686;"></div>
<div style="left:116px;top:611px;width:1px;height:6px;background:#5e5e5e;"></div>
<div style="left:116px;top:674px;width:1px;height:5px;background:#5e5e5e;"></div>
<span class="t" style="left:119.99px;top:615.60px;font-size:5.8px;color:#d0d0d0;letter-spacing:-0.2px;font-weight:400;line-height:10px;">7</span>
<div style="left:135px;top:649px;width:1px;height:25px;background:#868686;"></div>
<div style="left:135px;top:611px;width:1px;height:6px;background:#5e5e5e;"></div>
<div style="left:135px;top:674px;width:1px;height:5px;background:#5e5e5e;"></div>
<span class="t" style="left:139.155px;top:615.60px;font-size:5.8px;color:#d0d0d0;letter-spacing:-0.2px;font-weight:400;line-height:10px;">8</span>
<div style="left:154px;top:649px;width:1px;height:25px;background:#868686;"></div>
<div style="left:154px;top:611px;width:1px;height:6px;background:#5e5e5e;"></div>
<div style="left:154px;top:674px;width:1px;height:5px;background:#5e5e5e;"></div>
<span class="t" style="left:158.32px;top:615.60px;font-size:5.8px;color:#d0d0d0;letter-spacing:-0.2px;font-weight:400;line-height:10px;">9</span>
<div style="left:173px;top:649px;width:1px;height:25px;background:#868686;"></div>
<div style="left:173px;top:611px;width:1px;height:6px;background:#5e5e5e;"></div>
<div style="left:173px;top:674px;width:1px;height:5px;background:#5e5e5e;"></div>
<span class="t" style="left:177.48499999999999px;top:615.60px;font-size:5.8px;color:#d0d0d0;letter-spacing:-0.2px;font-weight:400;line-height:10px;">10</span>
<div style="left:193px;top:649px;width:1px;height:25px;background:#868686;"></div>
<div style="left:193px;top:611px;width:1px;height:6px;background:#5e5e5e;"></div>
<div style="left:193px;top:674px;width:1px;height:5px;background:#5e5e5e;"></div>
<span class="t" style="left:196.64999999999998px;top:615.60px;font-size:5.8px;color:#d0d0d0;letter-spacing:-0.2px;font-weight:400;line-height:10px;">11</span>
<div style="left:212px;top:649px;width:1px;height:25px;background:#868686;"></div>
<div style="left:212px;top:611px;width:1px;height:6px;background:#5e5e5e;"></div>
<div style="left:212px;top:674px;width:1px;height:5px;background:#5e5e5e;"></div>
<span class="t" style="left:215.815px;top:615.60px;font-size:5.8px;color:#d0d0d0;letter-spacing:-0.2px;font-weight:400;line-height:10px;">12</span>
<div style="left:231px;top:649px;width:1px;height:25px;background:#868686;"></div>
<div style="left:231px;top:611px;width:1px;height:6px;background:#5e5e5e;"></div>
<div style="left:231px;top:674px;width:1px;height:5px;background:#5e5e5e;"></div>
<span class="t" style="left:234.98px;top:615.60px;font-size:5.8px;color:#d0d0d0;letter-spacing:-0.2px;font-weight:400;line-height:10px;">13</span>
<div style="left:250px;top:649px;width:1px;height:25px;background:#868686;"></div>
<div style="left:250px;top:611px;width:1px;height:6px;background:#5e5e5e;"></div>
<div style="left:250px;top:674px;width:1px;height:5px;background:#5e5e5e;"></div>
<span class="t" style="left:254.14499999999998px;top:615.60px;font-size:5.8px;color:#d0d0d0;letter-spacing:-0.2px;font-weight:400;line-height:10px;">14</span>
<div style="left:269px;top:649px;width:1px;height:25px;background:#868686;"></div>
<div style="left:269px;top:611px;width:1px;height:6px;background:#5e5e5e;"></div>
<div style="left:269px;top:674px;width:1px;height:5px;background:#5e5e5e;"></div>
<span class="t" style="left:273.31px;top:615.60px;font-size:5.8px;color:#d0d0d0;letter-spacing:-0.2px;font-weight:400;line-height:10px;">15</span>
<div style="left:288px;top:649px;width:1px;height:25px;background:#868686;"></div>
<div style="left:288px;top:611px;width:1px;height:6px;background:#5e5e5e;"></div>
<div style="left:288px;top:674px;width:1px;height:5px;background:#5e5e5e;"></div>
<span class="t" style="left:292.47499999999997px;top:615.60px;font-size:5.8px;color:#d0d0d0;letter-spacing:-0.2px;font-weight:400;line-height:10px;">16</span>
<div style="left:308px;top:649px;width:1px;height:25px;background:#868686;"></div>
<div style="left:308px;top:611px;width:1px;height:6px;background:#5e5e5e;"></div>
<div style="left:308px;top:674px;width:1px;height:5px;background:#5e5e5e;"></div>
<span class="t" style="left:311.64px;top:615.60px;font-size:5.8px;color:#d0d0d0;letter-spacing:-0.2px;font-weight:400;line-height:10px;">17</span>
<div style="left:327px;top:649px;width:1px;height:25px;background:#868686;"></div>
<div style="left:327px;top:611px;width:1px;height:6px;background:#5e5e5e;"></div>
<div style="left:327px;top:674px;width:1px;height:5px;background:#5e5e5e;"></div>
<span class="t" style="left:330.805px;top:615.60px;font-size:5.8px;color:#d0d0d0;letter-spacing:-0.2px;font-weight:400;line-height:10px;">18</span>
<div style="left:346px;top:649px;width:1px;height:25px;background:#868686;"></div>
<div style="left:346px;top:611px;width:1px;height:6px;background:#5e5e5e;"></div>
<div style="left:346px;top:674px;width:1px;height:5px;background:#5e5e5e;"></div>
<span class="t" style="left:349.96999999999997px;top:615.60px;font-size:5.8px;color:#d0d0d0;letter-spacing:-0.2px;font-weight:400;line-height:10px;">19</span>
<div style="left:365px;top:649px;width:1px;height:25px;background:#868686;"></div>
<div style="left:365px;top:611px;width:1px;height:6px;background:#5e5e5e;"></div>
<div style="left:365px;top:674px;width:1px;height:5px;background:#5e5e5e;"></div>
<span class="t" style="left:369.135px;top:615.60px;font-size:5.8px;color:#d0d0d0;letter-spacing:-0.2px;font-weight:400;line-height:10px;">20</span>
<div style="left:384px;top:649px;width:1px;height:25px;background:#868686;"></div>
<div style="left:384px;top:611px;width:1px;height:6px;background:#5e5e5e;"></div>
<div style="left:384px;top:674px;width:1px;height:5px;background:#5e5e5e;"></div>
<span class="t" style="left:388.29999999999995px;top:615.60px;font-size:5.8px;color:#d0d0d0;letter-spacing:-0.2px;font-weight:400;line-height:10px;">21</span>
<div style="left:403px;top:649px;width:1px;height:25px;background:#868686;"></div>
<div style="left:403px;top:611px;width:1px;height:6px;background:#5e5e5e;"></div>
<div style="left:403px;top:674px;width:1px;height:5px;background:#5e5e5e;"></div>
<span class="t" style="left:407.465px;top:615.60px;font-size:5.8px;color:#d0d0d0;letter-spacing:-0.2px;font-weight:400;line-height:10px;">22</span>
<div style="left:423px;top:649px;width:1px;height:25px;background:#868686;"></div>
<div style="left:423px;top:611px;width:1px;height:6px;background:#5e5e5e;"></div>
<div style="left:423px;top:674px;width:1px;height:5px;background:#5e5e5e;"></div>
<span class="t" style="left:426.63px;top:615.60px;font-size:5.8px;color:#d0d0d0;letter-spacing:-0.2px;font-weight:400;line-height:10px;">23</span>
<div style="left:442px;top:649px;width:1px;height:25px;background:#868686;"></div>
<div style="left:442px;top:611px;width:1px;height:6px;background:#5e5e5e;"></div>
<div style="left:442px;top:674px;width:1px;height:5px;background:#5e5e5e;"></div>
<span class="t" style="left:445.79499999999996px;top:615.60px;font-size:5.8px;color:#d0d0d0;letter-spacing:-0.2px;font-weight:400;line-height:10px;">24</span>
<div style="left:461px;top:649px;width:1px;height:25px;background:#868686;"></div>
<div style="left:461px;top:611px;width:1px;height:6px;background:#5e5e5e;"></div>
<div style="left:461px;top:674px;width:1px;height:5px;background:#5e5e5e;"></div>
<span class="t" style="left:464.96px;top:615.60px;font-size:5.8px;color:#d0d0d0;letter-spacing:-0.2px;font-weight:400;line-height:10px;">25</span>
<div style="left:480px;top:649px;width:1px;height:25px;background:#868686;"></div>
<div style="left:480px;top:611px;width:1px;height:6px;background:#5e5e5e;"></div>
<div style="left:480px;top:674px;width:1px;height:5px;background:#5e5e5e;"></div>
<span class="t" style="left:484.125px;top:615.60px;font-size:5.8px;color:#d0d0d0;letter-spacing:-0.2px;font-weight:400;line-height:10px;">26</span>
<div style="left:499px;top:649px;width:1px;height:25px;background:#868686;"></div>
<div style="left:499px;top:611px;width:1px;height:6px;background:#5e5e5e;"></div>
<div style="left:499px;top:674px;width:1px;height:5px;background:#5e5e5e;"></div>
<span class="t" style="left:503.28999999999996px;top:615.60px;font-size:5.8px;color:#d0d0d0;letter-spacing:-0.2px;font-weight:400;line-height:10px;">27</span>
<div style="left:518px;top:649px;width:1px;height:25px;background:#868686;"></div>
<div style="left:518px;top:611px;width:1px;height:6px;background:#5e5e5e;"></div>
<div style="left:518px;top:674px;width:1px;height:5px;background:#5e5e5e;"></div>
<span class="t" style="left:522.4549999999999px;top:615.60px;font-size:5.8px;color:#d0d0d0;letter-spacing:-0.2px;font-weight:400;line-height:10px;">28</span>
<div style="left:538px;top:649px;width:1px;height:25px;background:#868686;"></div>
<div style="left:538px;top:611px;width:1px;height:6px;background:#5e5e5e;"></div>
<div style="left:538px;top:674px;width:1px;height:5px;background:#5e5e5e;"></div>
<span class="t" style="left:541.62px;top:615.60px;font-size:5.8px;color:#d0d0d0;letter-spacing:-0.2px;font-weight:400;line-height:10px;">29</span>
<div style="left:557px;top:649px;width:1px;height:25px;background:#868686;"></div>
<div style="left:557px;top:611px;width:1px;height:6px;background:#5e5e5e;"></div>
<div style="left:557px;top:674px;width:1px;height:5px;background:#5e5e5e;"></div>
<span class="t" style="left:560.785px;top:615.60px;font-size:5.8px;color:#d0d0d0;letter-spacing:-0.2px;font-weight:400;line-height:10px;">30</span>
<div style="left:576px;top:649px;width:1px;height:25px;background:#868686;"></div>
<div style="left:576px;top:611px;width:1px;height:6px;background:#5e5e5e;"></div>
<div style="left:576px;top:674px;width:1px;height:5px;background:#5e5e5e;"></div>
<span class="t" style="left:579.9499999999999px;top:615.60px;font-size:5.8px;color:#d0d0d0;letter-spacing:-0.2px;font-weight:400;line-height:10px;">31</span>
<div style="left:595px;top:649px;width:1px;height:25px;background:#868686;"></div>
<div style="left:595px;top:611px;width:1px;height:6px;background:#5e5e5e;"></div>
<div style="left:595px;top:674px;width:1px;height:5px;background:#5e5e5e;"></div>
<span class="t" style="left:599.115px;top:615.60px;font-size:5.8px;color:#d0d0d0;letter-spacing:-0.2px;font-weight:400;line-height:10px;">32</span>
<div style="left:614px;top:649px;width:1px;height:25px;background:#868686;"></div>
<div style="left:614px;top:611px;width:1px;height:6px;background:#5e5e5e;"></div>
<div style="left:614px;top:674px;width:1px;height:5px;background:#5e5e5e;"></div>
<span class="t" style="left:618.28px;top:615.60px;font-size:5.8px;color:#d0d0d0;letter-spacing:-0.2px;font-weight:400;line-height:10px;">33</span>
<div style="left:633px;top:649px;width:1px;height:25px;background:#868686;"></div>
<div style="left:633px;top:611px;width:1px;height:6px;background:#5e5e5e;"></div>
<div style="left:633px;top:674px;width:1px;height:5px;background:#5e5e5e;"></div>
<span class="t" style="left:637.4449999999999px;top:615.60px;font-size:5.8px;color:#d0d0d0;letter-spacing:-0.2px;font-weight:400;line-height:10px;">34</span>
<div style="left:653px;top:649px;width:1px;height:25px;background:#868686;"></div>
<div style="left:653px;top:611px;width:1px;height:6px;background:#5e5e5e;"></div>
<div style="left:653px;top:674px;width:1px;height:5px;background:#5e5e5e;"></div>
<span class="t" style="left:656.61px;top:615.60px;font-size:5.8px;color:#d0d0d0;letter-spacing:-0.2px;font-weight:400;line-height:10px;">35</span>
<div style="left:672px;top:649px;width:1px;height:25px;background:#868686;"></div>
<div style="left:672px;top:611px;width:1px;height:6px;background:#5e5e5e;"></div>
<div style="left:672px;top:674px;width:1px;height:5px;background:#5e5e5e;"></div>
<span class="t" style="left:675.775px;top:615.60px;font-size:5.8px;color:#d0d0d0;letter-spacing:-0.2px;font-weight:400;line-height:10px;">36</span>
<div style="left:691px;top:649px;width:1px;height:25px;background:#868686;"></div>
<div style="left:691px;top:611px;width:1px;height:6px;background:#5e5e5e;"></div>
<div style="left:691px;top:674px;width:1px;height:5px;background:#5e5e5e;"></div>
<span class="t" style="left:694.9399999999999px;top:615.60px;font-size:5.8px;color:#d0d0d0;letter-spacing:-0.2px;font-weight:400;line-height:10px;">37</span>
<div style="left:710px;top:649px;width:1px;height:25px;background:#868686;"></div>
<div style="left:710px;top:611px;width:1px;height:6px;background:#5e5e5e;"></div>
<div style="left:710px;top:674px;width:1px;height:5px;background:#5e5e5e;"></div>
<span class="t" style="left:714.105px;top:615.60px;font-size:5.8px;color:#d0d0d0;letter-spacing:-0.2px;font-weight:400;line-height:10px;">38</span>
<div style="left:729px;top:649px;width:1px;height:25px;background:#868686;"></div>
<div style="left:729px;top:611px;width:1px;height:6px;background:#5e5e5e;"></div>
<div style="left:729px;top:674px;width:1px;height:5px;background:#5e5e5e;"></div>
<span class="t" style="left:733.27px;top:615.60px;font-size:5.8px;color:#d0d0d0;letter-spacing:-0.2px;font-weight:400;line-height:10px;">39</span>
<div style="left:748px;top:649px;width:1px;height:25px;background:#868686;"></div>
<div style="left:748px;top:611px;width:1px;height:6px;background:#5e5e5e;"></div>
<div style="left:748px;top:674px;width:1px;height:5px;background:#5e5e5e;"></div>
<span class="t" style="left:752.435px;top:615.60px;font-size:5.8px;color:#d0d0d0;letter-spacing:-0.2px;font-weight:400;line-height:10px;">40</span>
<div style="left:768px;top:649px;width:1px;height:25px;background:#868686;"></div>
<div style="left:768px;top:611px;width:1px;height:6px;background:#5e5e5e;"></div>
<div style="left:768px;top:674px;width:1px;height:5px;background:#5e5e5e;"></div>
<span class="t" style="left:771.5999999999999px;top:615.60px;font-size:5.8px;color:#d0d0d0;letter-spacing:-0.2px;font-weight:400;line-height:10px;">41</span>
<div style="left:787px;top:649px;width:1px;height:25px;background:#868686;"></div>
<div style="left:787px;top:611px;width:1px;height:6px;background:#5e5e5e;"></div>
<div style="left:787px;top:674px;width:1px;height:5px;background:#5e5e5e;"></div>
<span class="t" style="left:790.765px;top:615.60px;font-size:5.8px;color:#d0d0d0;letter-spacing:-0.2px;font-weight:400;line-height:10px;">42</span>
<div style="left:806px;top:649px;width:1px;height:25px;background:#868686;"></div>
<div style="left:806px;top:611px;width:1px;height:6px;background:#5e5e5e;"></div>
<div style="left:806px;top:674px;width:1px;height:5px;background:#5e5e5e;"></div>
<span class="t" style="left:809.93px;top:615.60px;font-size:5.8px;color:#d0d0d0;letter-spacing:-0.2px;font-weight:400;line-height:10px;">43</span>
<div style="left:825px;top:649px;width:1px;height:25px;background:#868686;"></div>
<div style="left:825px;top:611px;width:1px;height:6px;background:#5e5e5e;"></div>
<div style="left:825px;top:674px;width:1px;height:5px;background:#5e5e5e;"></div>
<span class="t" style="left:829.0949999999999px;top:615.60px;font-size:5.8px;color:#d0d0d0;letter-spacing:-0.2px;font-weight:400;line-height:10px;">44</span>
<div style="left:844px;top:649px;width:1px;height:25px;background:#868686;"></div>
<div style="left:844px;top:611px;width:1px;height:6px;background:#5e5e5e;"></div>
<div style="left:844px;top:674px;width:1px;height:5px;background:#5e5e5e;"></div>
<span class="t" style="left:848.26px;top:615.60px;font-size:5.8px;color:#d0d0d0;letter-spacing:-0.2px;font-weight:400;line-height:10px;">45</span>
<div style="left:863px;top:649px;width:1px;height:25px;background:#868686;"></div>
<div style="left:863px;top:611px;width:1px;height:6px;background:#5e5e5e;"></div>
<div style="left:863px;top:674px;width:1px;height:5px;background:#5e5e5e;"></div>
<span class="t" style="left:867.425px;top:615.60px;font-size:5.8px;color:#d0d0d0;letter-spacing:-0.2px;font-weight:400;line-height:10px;">46</span>
<div style="left:883px;top:649px;width:1px;height:25px;background:#868686;"></div>
<div style="left:883px;top:611px;width:1px;height:6px;background:#5e5e5e;"></div>
<div style="left:883px;top:674px;width:1px;height:5px;background:#5e5e5e;"></div>
<span class="t" style="left:886.5899999999999px;top:615.60px;font-size:5.8px;color:#d0d0d0;letter-spacing:-0.2px;font-weight:400;line-height:10px;">47</span>
<div style="left:902px;top:649px;width:1px;height:25px;background:#868686;"></div>
<div style="left:902px;top:611px;width:1px;height:6px;background:#5e5e5e;"></div>
<div style="left:902px;top:674px;width:1px;height:5px;background:#5e5e5e;"></div>
<span class="t" style="left:905.755px;top:615.60px;font-size:5.8px;color:#d0d0d0;letter-spacing:-0.2px;font-weight:400;line-height:10px;">48</span>
<div style="left:921px;top:649px;width:1px;height:25px;background:#868686;"></div>
<div style="left:921px;top:611px;width:1px;height:6px;background:#5e5e5e;"></div>
<div style="left:921px;top:674px;width:1px;height:5px;background:#5e5e5e;"></div>
<span class="t" style="left:924.92px;top:615.60px;font-size:5.8px;color:#d0d0d0;letter-spacing:-0.2px;font-weight:400;line-height:10px;">49</span>
<div style="left:940px;top:649px;width:1px;height:25px;background:#868686;"></div>
<div style="left:940px;top:611px;width:1px;height:6px;background:#5e5e5e;"></div>
<div style="left:940px;top:674px;width:1px;height:5px;background:#5e5e5e;"></div>
<span class="t" style="left:944.0849999999999px;top:615.60px;font-size:5.8px;color:#d0d0d0;letter-spacing:-0.2px;font-weight:400;line-height:10px;">50</span>
<div style="left:959px;top:649px;width:1px;height:25px;background:#868686;"></div>
<div style="left:959px;top:611px;width:1px;height:6px;background:#5e5e5e;"></div>
<div style="left:959px;top:674px;width:1px;height:5px;background:#5e5e5e;"></div>
<span class="t" style="left:963.25px;top:615.60px;font-size:5.8px;color:#d0d0d0;letter-spacing:-0.2px;font-weight:400;line-height:10px;">51</span>
<div style="left:978px;top:649px;width:1px;height:25px;background:#868686;"></div>
<div style="left:978px;top:611px;width:1px;height:6px;background:#5e5e5e;"></div>
<div style="left:978px;top:674px;width:1px;height:5px;background:#5e5e5e;"></div>
<span class="t" style="left:982.415px;top:615.60px;font-size:5.8px;color:#d0d0d0;letter-spacing:-0.2px;font-weight:400;line-height:10px;">52</span>
<div style="left:998px;top:649px;width:1px;height:25px;background:#868686;"></div>
<div style="left:998px;top:611px;width:1px;height:6px;background:#5e5e5e;"></div>
<div style="left:998px;top:674px;width:1px;height:5px;background:#5e5e5e;"></div>
<span class="t" style="left:1001.5799999999999px;top:615.60px;font-size:5.8px;color:#d0d0d0;letter-spacing:-0.2px;font-weight:400;line-height:10px;">53</span>
<div style="left:1017px;top:649px;width:1px;height:25px;background:#868686;"></div>
<div style="left:1017px;top:611px;width:1px;height:6px;background:#5e5e5e;"></div>
<div style="left:1017px;top:674px;width:1px;height:5px;background:#5e5e5e;"></div>
<span class="t" style="left:1020.745px;top:615.60px;font-size:5.8px;color:#d0d0d0;letter-spacing:-0.2px;font-weight:400;line-height:10px;">54</span>
<div style="left:1036px;top:649px;width:1px;height:25px;background:#868686;"></div>
<div style="left:1036px;top:611px;width:1px;height:6px;background:#5e5e5e;"></div>
<div style="left:1036px;top:674px;width:1px;height:5px;background:#5e5e5e;"></div>
<span class="t" style="left:1039.9099999999999px;top:615.60px;font-size:5.8px;color:#d0d0d0;letter-spacing:-0.2px;font-weight:400;line-height:10px;">55</span>
<div style="left:1055px;top:649px;width:1px;height:25px;background:#868686;"></div>
<div style="left:1055px;top:611px;width:1px;height:6px;background:#5e5e5e;"></div>
<div style="left:1055px;top:674px;width:1px;height:5px;background:#5e5e5e;"></div>
<span class="t" style="left:1059.075px;top:615.60px;font-size:5.8px;color:#d0d0d0;letter-spacing:-0.2px;font-weight:400;line-height:10px;">56</span>
<div style="left:1074px;top:649px;width:1px;height:25px;background:#868686;"></div>
<div style="left:1074px;top:611px;width:1px;height:6px;background:#5e5e5e;"></div>
<div style="left:1074px;top:674px;width:1px;height:5px;background:#5e5e5e;"></div>
<span class="t" style="left:1078.24px;top:615.60px;font-size:5.8px;color:#d0d0d0;letter-spacing:-0.2px;font-weight:400;line-height:10px;">57</span>
<div style="left:1093px;top:649px;width:1px;height:25px;background:#868686;"></div>
<div style="left:1093px;top:611px;width:1px;height:6px;background:#5e5e5e;"></div>
<div style="left:1093px;top:674px;width:1px;height:5px;background:#5e5e5e;"></div>
<span class="t" style="left:1097.405px;top:615.60px;font-size:5.8px;color:#d0d0d0;letter-spacing:-0.2px;font-weight:400;line-height:10px;">58</span>
<div style="left:1113px;top:649px;width:1px;height:25px;background:#868686;"></div>
<div style="left:1113px;top:611px;width:1px;height:6px;background:#5e5e5e;"></div>
<div style="left:1113px;top:674px;width:1px;height:5px;background:#5e5e5e;"></div>
<span class="t" style="left:1116.57px;top:615.60px;font-size:5.8px;color:#d0d0d0;letter-spacing:-0.2px;font-weight:400;line-height:10px;">59</span>
<div style="left:1132px;top:649px;width:1px;height:25px;background:#868686;"></div>
<div style="left:1132px;top:611px;width:1px;height:6px;background:#5e5e5e;"></div>
<div style="left:1132px;top:674px;width:1px;height:5px;background:#5e5e5e;"></div>
<span class="t" style="left:1135.735px;top:615.60px;font-size:5.8px;color:#d0d0d0;letter-spacing:-0.2px;font-weight:400;line-height:10px;">60</span>
<div style="left:1161px;top:640px;width:25px;height:10.6px;background:#2e2e2e;"></div>
<span class="t" style="left:1163px;top:640.30px;font-size:6px;color:#d0d0d0;letter-spacing:-0.45px;font-weight:400;line-height:10px;">0</span>
<svg style="left:1190px;top:640px" width="90" height="11"><path d="M2 1 v9 M8 1 L3 5.5 L8 10Z M12 1 L7 5.5 L12 10Z" stroke="#cfcfcf" stroke-width="1" fill="#cfcfcf"/><path d="M18 1 v9" stroke="#cfcfcf" stroke-width="1.5"/><path d="M25 1 L19 5.5 L25 10Z" fill="#cfcfcf"/><path d="M32 1 v9" stroke="#e0803a" stroke-width="1.5"/><path d="M39 1 L33 5.5 L39 10Z" fill="#cfcfcf"/><path d="M55 1 L48 5.5 L55 10Z" fill="#cfcfcf"/><path d="M63 1 L70 5.5 L63 10Z" fill="#cfcfcf"/><path d="M77 1 L83 5.5 L77 10Z" fill="#cfcfcf"/><path d="M84 1 v9" stroke="#e0803a" stroke-width="1.5"/></svg>
<div style="left:0px;top:679px;width:1280px;height:17px;background:#474747;"></div>
<div style="left:0px;top:684px;width:4px;height:10px;background:#2e2e2e;"></div>
<div style="left:9px;top:683.5px;width:911px;height:11px;background:#595959;;border-radius:2px;border:1px solid #3c3c3c;box-sizing:border-box"></div>
<div style="left:11px;top:685px;width:3.5px;height:8px;background:#c8c8c8;"></div>
<span class="t" style="left:19px;top:684.00px;font-size:6px;color:#d0d0d0;letter-spacing:-0.45px;font-weight:400;line-height:10px;">0</span>
<div style="left:915px;top:685px;width:4px;height:8px;background:#c8c8c8;"></div>
<span class="t" style="right:368px;top:684.00px;font-size:6px;color:#d0d0d0;letter-spacing:-0.35px;font-weight:400;line-height:10px">60</span>
<div style="left:925px;top:684px;width:26px;height:10.5px;background:#2e2e2e;"></div>
<span class="t" style="left:928px;top:684.00px;font-size:6px;color:#d0d0d0;letter-spacing:-0.45px;font-weight:400;line-height:10px;">60</span>
<div style="left:962px;top:685px;width:1.5px;height:8px;background:#9a9a9a;"></div>
<div style="left:995px;top:685px;width:1.5px;height:8px;background:#9a9a9a;"></div>
<div style="left:977px;top:684px;width:6px;height:9px;background:#e07a3a;"></div>
<svg style="left:1008px;top:687px" width="6" height="4"><path d="M0 0 L6 0 L3 3Z" fill="#999"/></svg>
<span class="t" style="left:1021px;top:684.00px;font-size:6px;color:#d8d8d8;letter-spacing:-0.45px;font-weight:400;line-height:10px;">No Character Set</span>
<span class="t" style="left:1091px;top:684.00px;font-size:6px;color:#d8d8d8;letter-spacing:-0.45px;font-weight:400;line-height:10px;">No Anim Layer</span>
<div style="left:1152px;top:685px;width:1.5px;height:8px;background:#9a9a9a;"></div>
<span class="t" style="left:1166px;top:684.00px;font-size:6px;color:#d8d8d8;letter-spacing:-0.45px;font-weight:400;line-height:10px;">24 fps</span>
<svg style="left:1201px;top:687px" width="6" height="4"><path d="M0 0 L6 0 L3 3Z" fill="#ddd"/></svg>
<svg style="left:1214px;top:684px" width="11" height="9"><path d="M2 3 h6 l-2 -2 M9 6 h-6 l2 2" stroke="#ddd" stroke-width="1.3" fill="none"/></svg>
<div style="left:1231px;top:684px;width:8px;height:9px;background:#d08a50;"></div>
<div style="left:1251px;top:685px;width:1.5px;height:8px;background:#9a9a9a;"></div>
<svg style="left:1263px;top:684px" width="11" height="9"><path d="M1 3 h2 l3 -2 v7 l-3 -2 h-2Z" fill="#ddd"/><path d="M8 2 q2 2.5 0 5" stroke="#ddd" fill="none"/></svg>
<div style="left:1278px;top:684px;width:2px;height:9px;background:#e02020;"></div>
<div style="left:0px;top:696px;width:1280px;height:24px;background:#4a4b4a;"></div>
<div style="left:0px;top:696px;width:1280px;height:1px;background:#3e3e3e;"></div>
<span class="t" style="left:0px;top:705.00px;font-size:6.2px;color:#e6e6e6;letter-spacing:-0.3px;font-weight:400;line-height:10px;">ct Tool: select an object</span>
<div style="left:650px;top:697px;width:4px;height:23px;background:#595959;"></div>
<div style="left:654px;top:704.7px;width:26px;height:10px;background:#555555;"></div>
<span class="t" style="left:658px;top:704.70px;font-size:6px;color:#e0e0e0;letter-spacing:-0.2px;font-weight:400;line-height:10px;">Python</span>
<div style="left:680px;top:704.7px;width:600px;height:10px;background:#2e2e2e;"></div>
<div style="left:984px;top:704.7px;width:1px;height:10px;background:#6a6a6a;"></div>
<div style="left:0px;top:719px;width:1280px;height:1px;background:#2a2a2a;"></div>
<div style="left:797px;top:78px;width:255px;height:417px;background:#2a2a2a;"></div>
<div style="left:798px;top:79px;width:254px;height:416px;background:#5c5c5c;"></div>
<div style="left:800px;top:95.5px;width:250px;height:397px;background:#444444;"></div>
<div style="left:798.5px;top:79.5px;width:253px;height:16px;background:#ffffff;"></div>
<div style="left:803px;top:83px;width:7px;height:8px;background:#3aa0b8;;border-radius:1.5px"></div>
<div style="left:805px;top:84px;width:3px;height:3px;background:#e8f4f8;"></div>
<div style="left:804px;top:89px;width:5px;height:1.5px;background:#1a4050;"></div>
<span class="t" style="left:813px;top:82.80px;font-size:7px;color:#8a8a8a;letter-spacing:-0.2px;font-weight:400;line-height:10px;">Outliner</span>
<div style="left:987px;top:87.5px;width:6px;height:1px;background:#9a9a9a;"></div>
<div style="left:1011px;top:84.5px;width:6px;height:6px;background:transparent;;border:1px solid #9a9a9a;box-sizing:border-box"></div>
<svg style="left:1035px;top:84px" width="8" height="8"><path d="M1 1 L7 7 M7 1 L1 7" stroke="#8a8a8a" stroke-width="1"/></svg>
<span class="t" style="left:805px;top:97.00px;font-size:6.5px;color:#d0d0d0;letter-spacing:-0.35px;font-weight:400;line-height:10px;">Display</span>
<span class="t" style="left:831px;top:97.00px;font-size:6.5px;color:#d0d0d0;letter-spacing:-0.35px;font-weight:400;line-height:10px;">Show</span>
<span class="t" style="left:853px;top:97.00px;font-size:6.5px;color:#d0d0d0;letter-spacing:-0.35px;font-weight:400;line-height:10px;">Help</span>
<svg style="left:802px;top:110px" width="10" height="9"><path d="M1 3 V1 H3 M7 1 H9 V3 M9 6 V8 H7 M3 8 H1 V6" stroke="#9a9a9a" stroke-width="1" fill="none"/></svg>
<div style="left:815px;top:109.5px;width:234px;height:10px;background:#2f2f2f;"></div>
<span class="t" style="left:816.5px;top:109.50px;font-size:6.3px;color:#7a7a7a;letter-spacing:-0.3px;font-weight:400;line-height:10px;">Search...</span>
<svg style="left:1042px;top:112px" width="7" height="5"><path d="M0 0.5 L7 0.5 L3.5 4.5Z" fill="#e8e8e8"/></svg>
<div style="left:800px;top:120px;width:243.5px;height:363.5px;background:#3e3f3e;"></div>
<div style="left:1043.5px;top:120px;width:7px;height:363.5px;background:#6b6b6b;"></div>
<svg style="left:1044px;top:121px" width="6" height="5"><path d="M0 4.5 L6 4.5 L3 0.5Z" fill="#eeeeee"/></svg>
<svg style="left:1044px;top:478px" width="6" height="5"><path d="M0 0.5 L6 0.5 L3 4.5Z" fill="#eeeeee"/></svg>
<div style="left:1043px;top:483.5px;width:7.5px;height:7px;background:#2f2f2f;"></div>
<div style="left:800px;top:483.5px;width:243.5px;height:7px;background:#4a4a4a;"></div>
<div style="left:806px;top:484px;width:231px;height:5.5px;background:#6c6c6c;;border-radius:2px"></div>
<svg style="left:801px;top:484px" width="4" height="5"><path d="M3.5 0 L0.5 2.5 L3.5 5Z" fill="#eee"/></svg>
<svg style="left:1038px;top:484px" width="4" height="5"><path d="M0.5 0 L3.5 2.5 L0.5 5Z" fill="#eee"/></svg>
<div style="left:800px;top:490.5px;width:250px;height:2.5px;background:#4a4a4a;"></div>
<div style="left:800px;top:194px;width:243.3px;height:11px;background:#5b8fb2;"></div>
<div style="left:819px;top:123.7px;width:5px;height:5px;background:#e8e8e8;"></div>
<svg style="left:823.5px;top:123.7px" width="4" height="5"><path d="M0 2.5 L3 0 L3 5Z" fill="#e8e8e8"/></svg>
<span class="t" style="left:828.3px;top:121.20px;font-size:6.2px;color:#6a6a6a;letter-spacing:-0.4px;font-weight:400;line-height:10px;">persp</span>
<div style="left:819px;top:134.18px;width:5px;height:5px;background:#e8e8e8;"></div>
<svg style="left:823.5px;top:134.2px" width="4" height="5"><path d="M0 2.5 L3 0 L3 5Z" fill="#e8e8e8"/></svg>
<span class="t" style="left:828.3px;top:131.68px;font-size:6.2px;color:#6a6a6a;letter-spacing:-0.4px;font-weight:400;line-height:10px;">top</span>
<div style="left:819px;top:144.66px;width:5px;height:5px;background:#e8e8e8;"></div>
<svg style="left:823.5px;top:144.7px" width="4" height="5"><path d="M0 2.5 L3 0 L3 5Z" fill="#e8e8e8"/></svg>
<span class="t" style="left:828.3px;top:142.16px;font-size:6.2px;color:#6a6a6a;letter-spacing:-0.4px;font-weight:400;line-height:10px;">front</span>
<div style="left:819px;top:155.14000000000001px;width:5px;height:5px;background:#e8e8e8;"></div>
<svg style="left:823.5px;top:155.1px" width="4" height="5"><path d="M0 2.5 L3 0 L3 5Z" fill="#e8e8e8"/></svg>
<span class="t" style="left:828.3px;top:152.64px;font-size:6.2px;color:#6a6a6a;letter-spacing:-0.4px;font-weight:400;line-height:10px;">side</span>
<div style="left:811px;top:165.6px;width:5px;height:5px;border:1px solid #777;box-sizing:border-box"></div>
<svg style="left:818px;top:163.1px" width="9" height="10"><path d="M2 3 v3.5 a2.5 2.5 0 0 0 5 0 v-3.5" stroke="#f0f0f0" stroke-width="1.6" fill="none"/><rect x="1.2" y="0.5" width="1.6" height="1.6" fill="#e07020"/><rect x="6.2" y="0.5" width="1.6" height="1.6" fill="#c0d020"/></svg>
<span class="t" style="left:828.3px;top:163.12px;font-size:6.2px;color:#e8e8e8;letter-spacing:-0.4px;font-weight:400;line-height:10px;">animBot</span>
<svg style="left:818.5px;top:174.6px" width="9" height="8"><path d="M2 0.5 H8.5 L7 7.5 H0.5Z" fill="#e8e8e8"/><path d="M3 6 L7 1.5" stroke="#d03030" stroke-width="1.5"/><path d="M1.5 6.5 L4.5 2" stroke="#d03030" stroke-width="0.9"/></svg>
<span class="t" style="left:828.3px;top:173.60px;font-size:6.2px;color:#e8e8e8;letter-spacing:-0.4px;font-weight:400;line-height:10px;">PICKER_DATA</span>
<svg style="left:818.5px;top:185.6px" width="9" height="7"><path d="M0.5 3.5 L4.5 0.5 L8.5 3.5 L4.5 6.5Z" fill="#d8d8d8"/><path d="M4.5 2 L6 3.5 L4.5 5 L3 3.5Z" fill="#555"/></svg>
<span class="t" style="left:828.3px;top:184.08px;font-size:6.2px;color:#e8e8e8;letter-spacing:-0.4px;font-weight:400;line-height:10px;">pPlane1</span>
<div style="left:811px;top:197.1px;width:5px;height:5px;border:1px solid #6a8aa0;box-sizing:border-box"></div>
<svg style="left:818.5px;top:195.6px" width="9" height="8"><path d="M2 0.5 H8.5 L7 7.5 H0.5Z" fill="#e8e8e8"/><path d="M3 6 L7 1.5" stroke="#d03030" stroke-width="1.5"/><path d="M1.5 6.5 L4.5 2" stroke="#d03030" stroke-width="0.9"/></svg>
<span class="t" style="left:828.3px;top:194.56px;font-size:6.2px;color:#e8e8e8;letter-spacing:-0.4px;font-weight:400;line-height:10px;">rig</span>
<div style="left:811px;top:207.5px;width:5px;height:5px;border:1px solid #777;box-sizing:border-box"></div>
<svg style="left:818.5px;top:206.0px" width="9" height="8"><path d="M2 0.5 H8.5 L7 7.5 H0.5Z" fill="#e8e8e8"/><path d="M3 6 L7 1.5" stroke="#d03030" stroke-width="1.5"/><path d="M1.5 6.5 L4.5 2" stroke="#d03030" stroke-width="0.9"/></svg>
<span class="t" style="left:828.3px;top:205.04px;font-size:6.2px;color:#e8e8e8;letter-spacing:-0.4px;font-weight:400;line-height:10px;">IK_TO_FK_Limbs</span>
<div style="left:811px;top:218.0px;width:5px;height:5px;border:1px solid #777;box-sizing:border-box"></div>
<svg style="left:818.5px;top:216.5px" width="9" height="8"><path d="M2 0.5 H8.5 L7 7.5 H0.5Z" fill="#e8e8e8"/><path d="M3 6 L7 1.5" stroke="#d03030" stroke-width="1.5"/><path d="M1.5 6.5 L4.5 2" stroke="#d03030" stroke-width="0.9"/></svg>
<span class="t" style="left:828.3px;top:215.52px;font-size:6.2px;color:#e8e8e8;letter-spacing:-0.4px;font-weight:400;line-height:10px;">animBot1</span>
<div style="left:818.5px;top:227.0px;width:8px;height:8px;border-radius:50%;background:radial-gradient(circle at 60% 40%,#9fe 0,#3a9aaa 50%,#cfe 51%,#2a6a7a 80%)"></div>
<span class="t" style="left:828.3px;top:226.00px;font-size:6.2px;color:#e8e8e8;letter-spacing:-0.4px;font-weight:400;line-height:10px;">defaultLightSet</span>
<div style="left:818.5px;top:237.5px;width:8px;height:8px;border-radius:50%;background:radial-gradient(circle at 60% 40%,#9fe 0,#3a9aaa 50%,#cfe 51%,#2a6a7a 80%)"></div>
<span class="t" style="left:828.3px;top:236.48px;font-size:6.2px;color:#e8e8e8;letter-spacing:-0.4px;font-weight:400;line-height:10px;">defaultObjectSet</span>
<svg style="left:857px;top:225px" width="10" height="14"><path d="M1 1 L1 10 L3.5 8 L5.5 12 L7 11.3 L5 7.5 L8 7.5Z" fill="#ffffff" stroke="#111" stroke-width="0.7"/><rect x="6" y="9" width="3.5" height="4" fill="#eee" stroke="#111" stroke-width="0.5"/></svg>
<svg style="left:1040px;top:645px" width="240" height="65" viewBox="1040 645 240 65">
<path d="M1150.5 655.5H1136.0Q1131.0 655.5 1131.0 660.5V673.0Q1131.0 678.0 1136.0 678.0H1150.5V665.625H1140.75M1153.6 678.0V660.5Q1153.6 655.5 1158.6 655.5H1168.1Q1173.1 655.5 1173.1 660.5V678.0M1244.0 678.0V660.5Q1244.0 655.5 1249.0 655.5H1258.5Q1263.5 655.5 1263.5 660.5V678.0M1181.2 655.5H1190.7Q1195.7 655.5 1195.7 660.5V673.0Q1195.7 678.0 1190.7 678.0H1181.2Q1176.2 678.0 1176.2 673.0V660.5Q1176.2 655.5 1181.2 655.5ZM1226.4 655.5H1235.9Q1240.9 655.5 1240.9 660.5V673.0Q1240.9 678.0 1235.9 678.0H1226.4Q1221.4 678.0 1221.4 673.0V660.5Q1221.4 655.5 1226.4 655.5ZM1198.8 678.0V660.5Q1198.8 655.5 1203.8 655.5H1213.3Q1218.3 655.5 1218.3 660.5V678.0M1208.55 655.5V678.0" stroke="rgba(255,255,255,0.17)" stroke-width="3.3" fill="none"/>
<text x="0" y="0" transform="translate(1127 678.5) rotate(-90)" font-family="Liberation Sans" font-size="12.5" fill="none" stroke="rgba(255,255,255,0.17)" stroke-width="1.2" letter-spacing="1.5">THE</text>
<text x="1116" y="703" font-family="Liberation Sans" font-size="24" textLength="139" lengthAdjust="spacingAndGlyphs" fill="none" stroke="rgba(255,255,255,0.17)" stroke-width="1.3">WORKSHOP</text>
<path d="M1104.0 688.5 L1103.7 691.9 L1099.3 694.2 L1097.9 696.8 L1098.6 701.1 L1095.8 703.5 L1090.8 702.9 L1087.7 704.1 L1085.0 707.8 L1081.0 708.0 L1077.6 704.8 L1074.3 704.1 L1069.5 705.4 L1066.2 703.5 L1066.1 699.2 L1064.1 696.8 L1059.4 695.2 L1058.3 691.9 L1061.5 688.5 L1061.8 685.6 L1059.4 681.8 L1061.1 678.7 L1066.1 677.8 L1068.5 675.8 L1069.5 671.6 L1073.1 670.1 L1077.6 672.2 L1081.0 671.9 L1085.0 669.2 L1088.9 670.1 L1090.8 674.1 L1093.5 675.8 L1098.6 675.9 L1100.9 678.7 L1099.3 682.8 L1100.2 685.6Z" fill="rgba(255,255,255,0.17)"/>
<ellipse cx="1081" cy="688.5" rx="12" ry="10" fill="rgba(0,0,0,0.12)"/>
<path d="M1102 654 L1092 672 L1083 690 L1077 684 Z" fill="rgba(255,255,255,0.17)"/>
</svg>
</body></html>
